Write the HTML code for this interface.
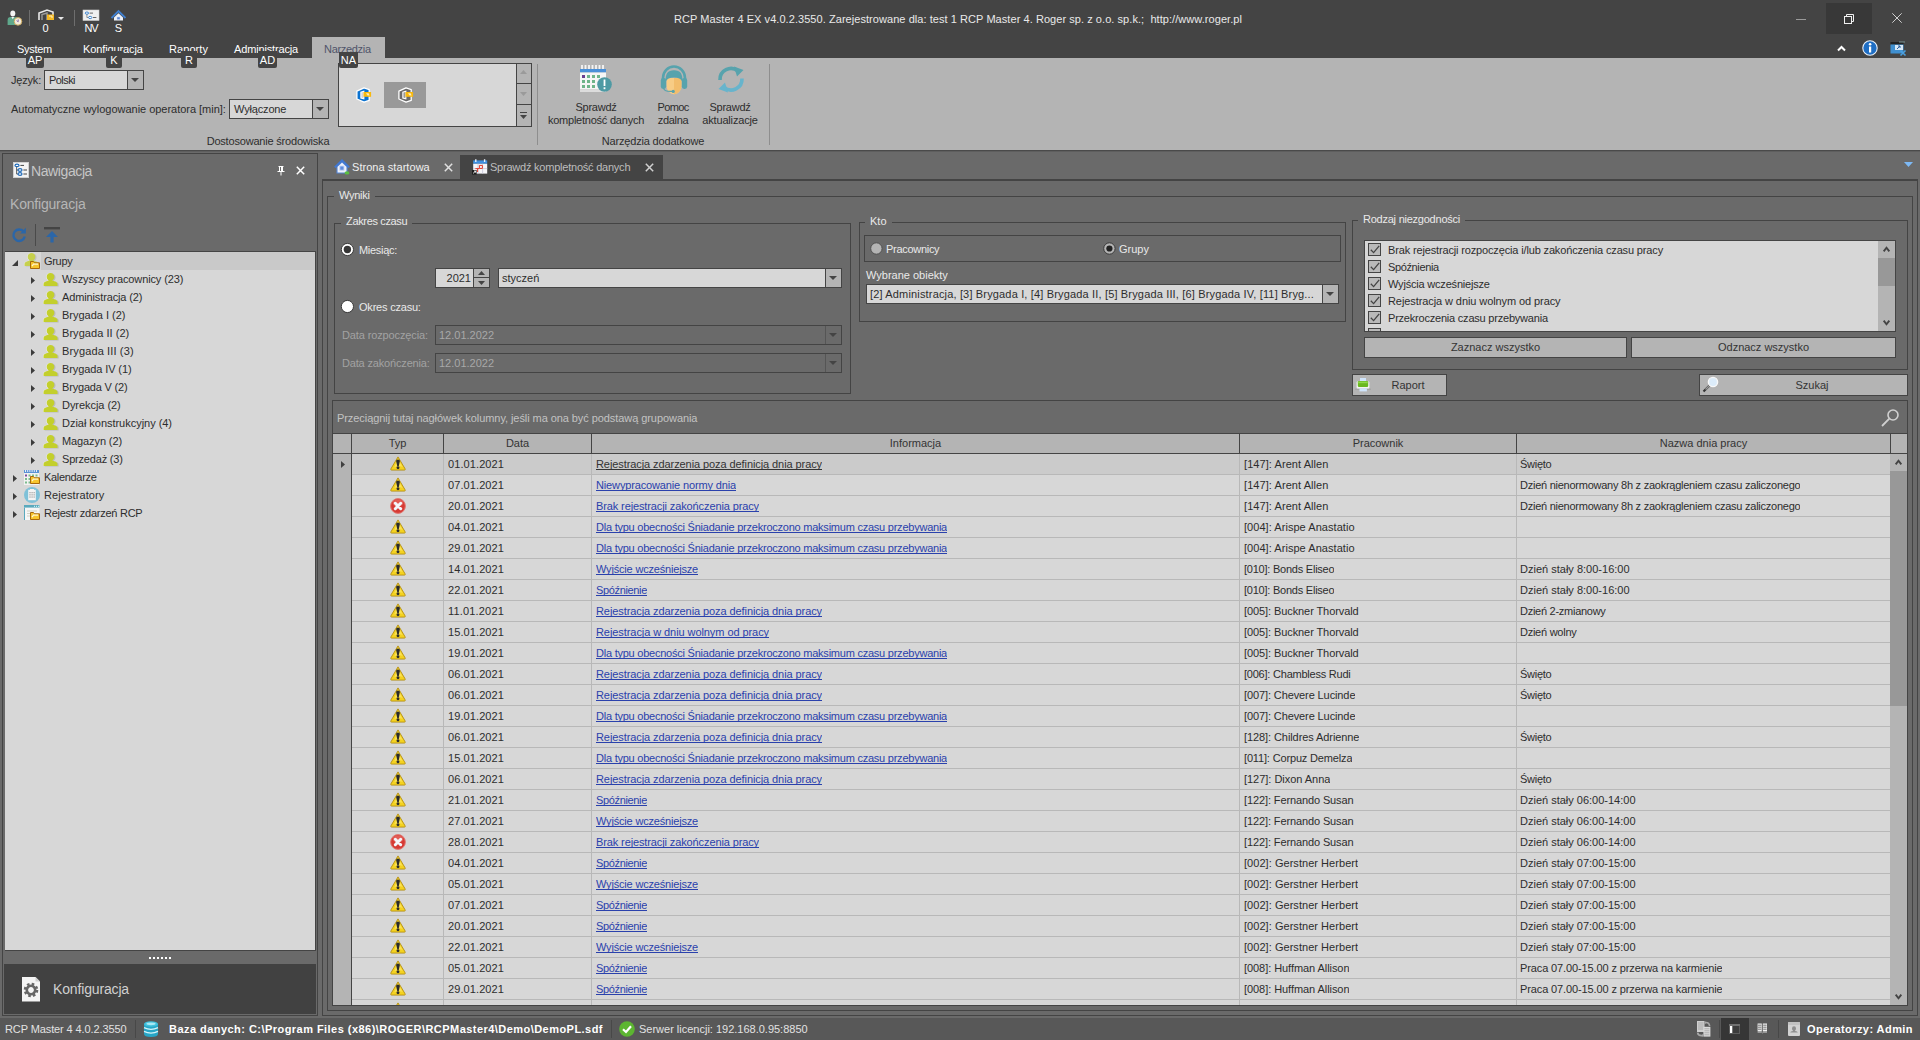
<!DOCTYPE html>
<html lang="pl">
<head>
<meta charset="utf-8">
<title>RCP Master 4</title>
<style>
*{box-sizing:border-box;margin:0;padding:0}
html,body{width:1920px;height:1040px;overflow:hidden;background:#6a6a6a}
body{font-family:"Liberation Sans",sans-serif;font-size:11px;color:#2d2d2d;position:relative;-webkit-font-smoothing:antialiased}
.a{position:absolute;white-space:pre}
.t{position:absolute;white-space:pre;line-height:13px;height:13px}
.lt{color:#e9e9e9}
.box{position:absolute;border:1px solid #444}
svg{position:absolute;overflow:visible}
.gl{position:absolute;background:#6a6a6a;padding:0 5px;line-height:13px;height:13px;color:#e9e9e9;white-space:pre}
.inp{position:absolute;border:1px solid #444;background:#d7d7d7}
.btn{position:absolute;border:1px solid #444;background:#b4b4b4;text-align:center;line-height:18px;color:#333}
.dd{position:absolute;top:0;right:0;bottom:0;width:16px;border-left:1px solid #444;background:#b4b4b4}
.dd:after{content:"";position:absolute;left:3px;top:7px;border:4px solid transparent;border-top:4px solid #444;border-bottom:0}
.kt{position:absolute;z-index:5;background:#444;color:#fff;text-align:center;line-height:13px;height:13px;border-radius:0 0 2px 2px}
/* grid */
.row{position:absolute;left:352px;width:1538px;height:21px;border-bottom:1px solid #b8b8b8;background:#d7d7d7}
.row.f{background:#cbcbcb}
.c{position:absolute;top:0;height:20px;line-height:20px;white-space:pre;overflow:hidden}
.vl{position:absolute;top:454px;height:551px;width:1px;background:#b8b8b8}
.lnk{color:#2a41ac;text-decoration:underline;text-decoration-skip-ink:none;text-underline-offset:1px;text-decoration-thickness:1px}
.row.f .lnk{color:#333}
.hd{position:absolute;top:434px;height:19px;line-height:18px;text-align:center;background:#b4b4b4;color:#333}
.hs{position:absolute;top:434px;height:20px;width:1px;background:#444}
.tr{position:absolute;left:0;width:310px;height:18px;line-height:18px}
.tr span{position:absolute;top:0;white-space:pre}
.arr{position:absolute;width:0;height:0;border:4px solid transparent;border-left:5px solid #444;border-right:0}
</style>
</head>
<body>
<!-- ===== title bar + ribbon ===== -->
<div class="a" style="left:0;top:0;width:1920px;height:58px;background:#444"></div>
<div class="a" style="left:0;top:58px;width:1920px;height:92px;background:#b4b4b4"></div>
<div class="a" style="left:0;top:150px;width:1920px;height:1px;background:#4a4a4a"></div>
<div class="a" style="left:0;top:151px;width:1920px;height:1px;background:#5e5e5e"></div>

<!-- quick access icons -->
<svg style="left:7px;top:10px" width="16" height="16" viewBox="0 0 16 16">
 <ellipse cx="5.8" cy="3.4" rx="2.5" ry="3" fill="#f4f4f4"/><path d="M0.6 15 V10 Q0.6 7 3.6 7 H8 Q11 7 11 10 V15 Z" fill="#5fa88c"/>
 <path d="M4.4 7 L5.8 9.2 L7.2 7 Z" fill="#f4f4f4"/>
 <circle cx="11" cy="11.4" r="3.8" fill="#f3ecdc" stroke="#caa555" stroke-width=".9"/><path d="M11.2 9.4 V11.8 L9.6 10.6" stroke="#8a6fb0" stroke-width="1" fill="none"/>
</svg>
<div class="a" style="left:29px;top:10px;width:1px;height:16px;background:#6e6e6e"></div>
<svg style="left:38px;top:9px" width="17" height="12" viewBox="0 0 17 12">
 <path d="M1 11 V4 L9 1 L15 3 V6" fill="none" stroke="#e8e8e8" stroke-width="1.6"/>
 <path d="M4 11 V5.5 L9 4 V11" fill="none" stroke="#9a9a9a" stroke-width="1.4"/>
 <rect x="9" y="5.5" width="7" height="5.5" fill="#f5b820"/><path d="M11 7 H14 L14 9" stroke="#fff3c8" stroke-width="1" fill="none"/>
</svg>
<svg style="left:58px;top:17px" width="6" height="3" viewBox="0 0 6 3"><path d="M0 0 H6 L3 3 Z" fill="#e8e8e8"/></svg>
<div class="t" style="left:35px;top:22px;width:21px;text-align:center;color:#fff">0</div>
<div class="a" style="left:74px;top:10px;width:1px;height:16px;background:#6e6e6e"></div>
<svg style="left:83px;top:10px" width="16" height="11" viewBox="0 0 16 11">
 <rect x="0" y="0" width="16" height="10.5" fill="#f0f0f0" stroke="#cfcfcf" stroke-width=".6"/>
 <path d="M3.9 4 V7.5 H5.6" stroke="#777" stroke-width=".8" fill="none"/>
 <ellipse cx="3.9" cy="3.1" rx="1.7" ry="1.1" fill="#fff" stroke="#2a78c8" stroke-width=".9"/>
 <ellipse cx="7.2" cy="7.5" rx="1.7" ry="1.1" fill="#fff" stroke="#2a78c8" stroke-width=".9"/>
 <path d="M6.6 3.1 H10 M10 7.5 H13.4" stroke="#666" stroke-width="1"/>
</svg>
<div class="t" style="letter-spacing:-1.141px;left:80px;top:22px;width:22px;text-align:center;color:#fff">NV</div>
<svg style="left:111px;top:10px" width="15" height="11" viewBox="0 0 15 11">
 <path d="M0.5 8 L7.5 1 L14.5 8" fill="none" stroke="#3f7fd0" stroke-width="1.8"/>
 <path d="M3 7.5 L7.5 3.2 L12 7.5 V10.5 H3 Z" fill="#eef2fa"/>
 <rect x="6" y="7" width="3" height="2.5" fill="#5a86d6" stroke="#c9d6f0" stroke-width=".5"/>
</svg>
<div class="t" style="left:108px;top:22px;width:21px;text-align:center;color:#fff">S</div>

<!-- title text -->
<div class="t" style="letter-spacing:0.057px;left:558px;top:13px;width:800px;text-align:center;color:#e9e9e9">RCP Master 4 EX v4.0.2.3550. Zarejestrowane dla: test 1 RCP Master 4. Roger sp. z o.o. sp.k.;  http://www.roger.pl</div>

<!-- window buttons -->
<div class="a" style="left:1796px;top:19px;width:10px;height:1px;background:#9a9a9a"></div>
<div class="a" style="left:1826px;top:3px;width:46px;height:31px;background:#383838"></div>
<svg style="left:1844px;top:14px" width="10" height="10" viewBox="0 0 10 10"><path d="M2.5 2.5 V0.5 H9.5 V7.5 H7.5" fill="none" stroke="#f0f0f0" stroke-width="1"/><rect x="0.5" y="2.5" width="7" height="7" fill="none" stroke="#f0f0f0" stroke-width="1"/></svg>
<svg style="left:1892px;top:13px" width="10" height="10" viewBox="0 0 10 10"><path d="M0.3 0.3 L9.7 9.7 M9.7 0.3 L0.3 9.7" stroke="#d0d0d0" stroke-width="1"/></svg>
<svg style="left:1837px;top:45px" width="9" height="7" viewBox="0 0 9 7"><path d="M1 5.5 L4.5 2 L8 5.5" fill="none" stroke="#fff" stroke-width="2"/></svg>
<svg style="left:1862px;top:40px" width="16" height="16" viewBox="0 0 16 16"><circle cx="8" cy="8" r="7.2" fill="#1f6ec4" stroke="#e8f0fa" stroke-width="1.1"/><rect x="7" y="6.5" width="2.2" height="6" fill="#fff"/><circle cx="8.1" cy="4.2" r="1.3" fill="#fff"/></svg>
<svg style="left:1890px;top:41px" width="17" height="15" viewBox="0 0 17 15">
 <rect x="0.5" y="1" width="13" height="2.5" fill="#222"/><rect x="0.5" y="3.5" width="13" height="9" fill="#3f8fd0"/>
 <rect x="5" y="4" width="8" height="5" fill="#d8e8f6"/><path d="M7 8 L10 5 M10 5 H8 M10 5 V7" stroke="#2a5f9e" stroke-width="1" fill="none"/>
 <path d="M10.5 9.5 L15.5 14.5 M15.5 9.5 L10.5 14.5" stroke="#4aa0e0" stroke-width="1.6"/>
 <path d="M10 0 v2 M12 0 v2 M14 0 v2" stroke="#8aa" stroke-width=".8"/>
</svg>

<!-- ribbon tabs -->
<div class="a" style="left:312px;top:37px;width:73px;height:21px;background:#b4b4b4"></div>
<div class="t lt" style="letter-spacing:-0.315px;left:17px;top:43px;color:#fff">System</div>
<div class="t lt" style="letter-spacing:-0.113px;left:83px;top:43px;color:#fff">Konfiguracja</div>
<div class="t lt" style="letter-spacing:0.067px;left:169px;top:43px;color:#fff">Raporty</div>
<div class="t lt" style="letter-spacing:-0.156px;left:234px;top:43px;color:#fff">Administracja</div>
<div class="t" style="letter-spacing:-0.315px;left:324px;top:43px;color:#50546a">Narzędzia</div>
<!-- key tips -->
<div class="kt" style="left:26px;top:54px;width:18px;height:14px">AP</div>
<div class="kt" style="left:106px;top:51px;width:16px;height:17px;padding-top:3px">K</div>
<div class="kt" style="left:181px;top:51px;width:16px;height:17px;padding-top:3px">R</div>
<div class="kt" style="left:258px;top:51px;width:19px;height:17px;padding-top:3px">AD</div>
<div class="kt" style="left:339px;top:52px;width:19px;height:16px;padding-top:2px">NA</div>

<!-- ribbon group 1 -->
<div class="t" style="letter-spacing:-0.198px;left:11px;top:74px">Język:</div>
<div class="inp" style="left:44px;top:70px;width:100px;height:20px"><div class="t" style="letter-spacing:-0.557px;left:4px;top:3px">Polski</div><div class="dd"></div></div>
<div class="t" style="letter-spacing:-0.025px;left:11px;top:103px">Automatyczne wylogowanie operatora [min]:</div>
<div class="inp" style="left:229px;top:99px;width:100px;height:20px"><div class="t" style="letter-spacing:-0.156px;left:4px;top:3px">Wyłączone</div><div class="dd"></div></div>
<div class="t" style="letter-spacing:-0.194px;left:168px;top:135px;width:200px;text-align:center">Dostosowanie środowiska</div>
<!-- gallery -->
<div class="inp" style="left:338px;top:63px;width:194px;height:64px"></div>
<div class="a" style="left:516px;top:64px;width:15px;height:62px;background:#b4b4b4;border-left:1px solid #444"></div>
<div class="a" style="left:516px;top:83px;width:15px;height:1px;background:#444"></div>
<div class="a" style="left:516px;top:104px;width:15px;height:1px;background:#444"></div>
<svg style="left:520px;top:70px" width="7" height="4" viewBox="0 0 7 4"><path d="M0 4 H7 L3.5 0 Z" fill="#9a9a9a"/></svg>
<svg style="left:520px;top:92px" width="7" height="4" viewBox="0 0 7 4"><path d="M0 0 H7 L3.5 4 Z" fill="#9a9a9a"/></svg>
<svg style="left:520px;top:112px" width="7" height="7" viewBox="0 0 7 7"><path d="M0 0.5 H7" stroke="#444" stroke-width="1"/><path d="M0 3 H7 L3.5 7 Z" fill="#444"/></svg>
<div class="a" style="left:384px;top:82px;width:42px;height:26px;background:#999"></div>
<svg style="left:356px;top:87px" width="16" height="16" viewBox="0 0 16 16">
 <path d="M0.9 4.2 L8 0.9 L13.2 2.6 V13.4 L8 15.1 L0.9 12 Z" fill="#0a72d0" stroke="#fff" stroke-width="1.3" stroke-linejoin="round"/>
 <path d="M4.3 4.8 L8.4 3.6 V12.6 L4.3 11.4 Z" fill="#fff"/><path d="M5.4 5.6 L7.4 5 V11.2 L5.4 10.6 Z" fill="#d4d4d4"/>
 <rect x="7.5" y="5" width="7.6" height="4.8" fill="#f8b90e"/><path d="M10 6.2 H12.6 L13.6 8.6 H11.6 Z" fill="#fdeec0"/>
</svg>
<svg style="left:398px;top:87px" width="16" height="16" viewBox="0 0 16 16">
 <path d="M0.9 4.2 L8 0.9 L13.2 2.6 V13.4 L8 15.1 L0.9 12 Z" fill="#6a6a6a" stroke="#fff" stroke-width="1.3" stroke-linejoin="round"/>
 <path d="M4.3 4.8 L8.4 3.6 V12.6 L4.3 11.4 Z" fill="#fff"/><path d="M5.4 5.6 L7.4 5 V11.2 L5.4 10.6 Z" fill="#9a9a9a"/>
 <rect x="7.5" y="5" width="7.6" height="4.8" fill="#f8b90e"/><path d="M10 6.2 H12.6 L13.6 8.6 H11.6 Z" fill="#fdeec0"/>
</svg>
<div class="a" style="left:537px;top:64px;width:1px;height:81px;background:#8e8e8e"></div>

<!-- ribbon group 2 : big buttons -->
<svg style="left:579px;top:65px" width="34" height="28" viewBox="0 0 34 28">
 <path d="M3 0 v5 M6.5 0 v5 M10 0 v5 M13.5 0 v5 M17 0 v5 M20.5 0 v5 M24 0 v5" stroke="#f4f4f4" stroke-width="1.8"/>
 <rect x="1" y="4" width="26" height="3.5" fill="#4a90d8"/>
 <rect x="1" y="7.5" width="26" height="17" fill="#f6f6f6"/><rect x="1" y="24.5" width="26" height="2.5" fill="#dcdcdc"/>
 <g fill="#6fb58a"><rect x="8" y="10" width="3" height="3"/><rect x="13" y="10" width="3" height="3"/><rect x="18" y="10" width="3" height="3"/>
 <rect x="3" y="15" width="3" height="3"/><rect x="8" y="15" width="3" height="3"/><rect x="13" y="15" width="3" height="3"/>
 <rect x="3" y="20" width="3" height="3"/><rect x="8" y="20" width="3" height="3"/><rect x="13" y="20" width="3" height="3"/></g>
 <rect x="3" y="10" width="3" height="3" fill="#6a3d90"/>
 <circle cx="25.5" cy="19.5" r="7.3" fill="#4e9aa4"/><rect x="24.6" y="14.5" width="1.8" height="6.5" fill="#fff"/><rect x="24.6" y="22.3" width="1.8" height="1.9" fill="#fff"/>
</svg>
<div class="t" style="letter-spacing:-0.257px;left:546px;top:101px;width:100px;text-align:center">Sprawdź</div>
<div class="t" style="letter-spacing:-0.227px;left:536px;top:114px;width:120px;text-align:center">kompletność danych</div>

<svg style="left:660px;top:65px" width="28" height="30" viewBox="0 0 28 30">
 <path d="M3 19 V13 A11 11.5 0 0 1 25 13 V19" fill="none" stroke="#57a3ad" stroke-width="2.6"/>
 <path d="M6.5 13 V20 Q6.5 26 11 28.5 Q14 30 17 28.5 Q21.5 26 21.5 20 V13 Z" fill="#f7cc85"/>
 <path d="M14 13 H21.5 V20 Q21.5 26 17 28.5 Q15.5 29.3 14 29.4 Z" fill="#f2bd6c"/>
 <path d="M5.8 16.5 Q4.6 5.2 14 5.2 Q23.4 5.2 22.2 16.5 Q20.5 12.5 14 12.5 Q7.5 12.5 5.8 16.5 Z" fill="#57a3ad"/>
 <rect x="0.8" y="13" width="5.4" height="11" rx="2.4" fill="#57a3ad"/><rect x="21.8" y="13" width="5.4" height="11" rx="2.4" fill="#57a3ad"/>
 <path d="M3.6 23 Q4 26.8 12 26.4" fill="none" stroke="#57a3ad" stroke-width="1.2"/><circle cx="13.2" cy="26.4" r="1.6" fill="#57a3ad"/>
</svg>
<div class="t" style="letter-spacing:-0.650px;left:633px;top:101px;width:80px;text-align:center">Pomoc</div>
<div class="t" style="letter-spacing:-0.320px;left:633px;top:114px;width:80px;text-align:center">zdalna</div>

<svg style="left:717px;top:65px" width="28" height="29" viewBox="0 0 28 29">
 <path d="M3 15 A11 11 0 0 1 21 6" fill="none" stroke="#57a3ad" stroke-width="3.6"/>
 <path d="M17 1.5 L26.5 5 L20 11.5 Z" fill="#57a3ad"/>
 <path d="M25 13.5 A11 11 0 0 1 7 22.5" fill="none" stroke="#67b4cc" stroke-width="3.6"/>
 <path d="M11 27.5 L1.5 24 L8 17.5 Z" fill="#67b4cc"/>
</svg>
<div class="t" style="letter-spacing:-0.257px;left:690px;top:101px;width:80px;text-align:center">Sprawdź</div>
<div class="t" style="letter-spacing:-0.174px;left:690px;top:114px;width:80px;text-align:center">aktualizacje</div>
<div class="t" style="letter-spacing:-0.174px;left:553px;top:135px;width:200px;text-align:center">Narzędzia dodatkowe</div>
<div class="a" style="left:769px;top:64px;width:1px;height:81px;background:#8e8e8e"></div>
<!-- ===== navigation panel ===== -->
<div class="box" style="left:2px;top:153px;width:316px;height:863px"></div>
<svg style="left:13px;top:162px" width="16" height="16" viewBox="0 0 16 16">
 <rect x="0.5" y="0.5" width="15" height="15" fill="#f4f4f4" stroke="#d0d0d0" stroke-width="1"/>
 <path d="M3.6 4 V12 H5 M3.6 8 H5" stroke="#555" stroke-width=".9" fill="none"/>
 <ellipse cx="4" cy="3.4" rx="2" ry="1.3" fill="#fff" stroke="#1f6ab8" stroke-width="1.2"/>
 <ellipse cx="7" cy="8" rx="2" ry="1.3" fill="#fff" stroke="#1f6ab8" stroke-width="1.2"/>
 <ellipse cx="7" cy="12" rx="2" ry="1.3" fill="#fff" stroke="#1f6ab8" stroke-width="1.2"/>
 <path d="M7.4 3.4 H11 M10.4 8 H14 M10.4 12 H14" stroke="#444" stroke-width="1"/>
</svg>
<div class="a" style="letter-spacing:-0.399px;left:31px;top:163px;font-size:14px;line-height:17px;color:#c6c6c6">Nawigacja</div>
<svg style="left:277px;top:166px" width="8" height="10" viewBox="0 0 8 10"><path d="M1.5 0.5 H6.5 M2.5 0.5 V5 M5.5 0.5 V5 M4.5 0.5 V5 M0.5 5.5 H7.5 M4 6 V9.5" stroke="#fff" stroke-width="1" fill="none"/></svg>
<svg style="left:296px;top:166px" width="9" height="9" viewBox="0 0 9 9"><path d="M0.8 0.8 L8.2 8.2 M8.2 0.8 L0.8 8.2" stroke="#fff" stroke-width="1.5"/></svg>
<div class="a" style="letter-spacing:-0.194px;left:10px;top:196px;font-size:14px;line-height:17px;color:#b6b6b6">Konfiguracja</div>
<svg style="left:11px;top:227px" width="16" height="16" viewBox="0 0 14 14"><path d="M11.2 4.3 A5 5 0 1 0 12 8.3" fill="none" stroke="#2b66a8" stroke-width="2.1"/><path d="M8 5.6 H13 V0.6 Z" fill="#2b66a8"/></svg>
<div class="a" style="left:35px;top:224px;width:1px;height:22px;background:#4a4a4a"></div>
<svg style="left:44px;top:227px" width="16" height="16" viewBox="0 0 16 16"><rect x="0" y="0" width="16" height="2.4" fill="#444"/><path d="M8 4 L14 10 H9.6 V15.6 H6.4 V10 H2 Z" fill="#2b66a8"/></svg>
<div class="a" style="left:5px;top:251px;width:311px;height:700px;background:#d7d7d7;border-top:1px solid #444;border-bottom:1px solid #444;border-right:1px solid #444"></div>
<div class="a" style="left:41px;top:252px;width:274px;height:18px;background:#c9c9c9"></div>
<svg style="left:12px;top:260px" width="6" height="6" viewBox="0 0 6 6"><path d="M6 0 V6 H0 Z" fill="#3c3c3c"/></svg>
<svg style="opacity:.8;left:24px;top:253px" width="16" height="13" viewBox="0 0 16 13">
 <path d="M7.5 0 C10 0 11.3 1.8 11.3 3.8 C11.3 5.6 10.4 6.6 9.6 7.2 L9.6 7.8 C12.5 8.3 14.5 9.3 14.5 11 V13 H0.5 V11 C0.5 9.3 2.5 8.3 5.4 7.8 L5.4 7.2 C4.6 6.6 3.7 5.6 3.7 3.8 C3.7 1.8 5 0 7.5 0 Z" transform="translate(1.2,0.4)" fill="#bcbcbc"/>
 <path d="M7.5 0 C10 0 11.3 1.8 11.3 3.8 C11.3 5.6 10.4 6.6 9.6 7.2 L9.6 7.8 C12.5 8.3 14.5 9.3 14.5 11 V13 H0.5 V11 C0.5 9.3 2.5 8.3 5.4 7.8 L5.4 7.2 C4.6 6.6 3.7 5.6 3.7 3.8 C3.7 1.8 5 0 7.5 0 Z" transform="translate(-0.5,0)" fill="#f0f0f0"/>
 <path d="M7.5 0 C10 0 11.3 1.8 11.3 3.8 C11.3 5.6 10.4 6.6 9.6 7.2 L9.6 7.8 C12.5 8.3 14.5 9.3 14.5 11 V13 H0.5 V11 C0.5 9.3 2.5 8.3 5.4 7.8 L5.4 7.2 C4.6 6.6 3.7 5.6 3.7 3.8 C3.7 1.8 5 0 7.5 0 Z" fill="#c3cf2c"/>
</svg>
<svg style="left:30px;top:261px" width="10" height="8" viewBox="0 0 10 8"><path d="M0.5 7.5 V0.5 H3.5 L4.5 1.8 H9.5 V7.5 Z" fill="#f7c52d" stroke="#a8690c" stroke-width="1"/><path d="M2 5.2 L3.5 3.2 H8" stroke="#fff6cf" stroke-width="1.3" fill="none"/></svg>
<div class="t" style="letter-spacing:-0.314px;left:44px;top:255px">Grupy</div>
<svg style="left:31px;top:277px" width="4" height="7" viewBox="0 0 4 7"><path d="M0 0 L4 3.5 L0 7 Z" fill="#3c3c3c"/></svg>
<svg style="left:43px;top:273px" width="16" height="13" viewBox="0 0 16 13">
 <path d="M7.5 0 C10 0 11.3 1.8 11.3 3.8 C11.3 5.6 10.4 6.6 9.6 7.2 L9.6 7.8 C12.5 8.3 14.5 9.3 14.5 11 V13 H0.5 V11 C0.5 9.3 2.5 8.3 5.4 7.8 L5.4 7.2 C4.6 6.6 3.7 5.6 3.7 3.8 C3.7 1.8 5 0 7.5 0 Z" transform="translate(1.2,0.4)" fill="#bcbcbc"/>
 <path d="M7.5 0 C10 0 11.3 1.8 11.3 3.8 C11.3 5.6 10.4 6.6 9.6 7.2 L9.6 7.8 C12.5 8.3 14.5 9.3 14.5 11 V13 H0.5 V11 C0.5 9.3 2.5 8.3 5.4 7.8 L5.4 7.2 C4.6 6.6 3.7 5.6 3.7 3.8 C3.7 1.8 5 0 7.5 0 Z" transform="translate(-0.5,0)" fill="#f0f0f0"/>
 <path d="M7.5 0 C10 0 11.3 1.8 11.3 3.8 C11.3 5.6 10.4 6.6 9.6 7.2 L9.6 7.8 C12.5 8.3 14.5 9.3 14.5 11 V13 H0.5 V11 C0.5 9.3 2.5 8.3 5.4 7.8 L5.4 7.2 C4.6 6.6 3.7 5.6 3.7 3.8 C3.7 1.8 5 0 7.5 0 Z" fill="#c3cf2c"/>
</svg>
<div class="t" style="letter-spacing:-0.125px;left:62px;top:273px">Wszyscy pracownicy (23)</div>
<svg style="left:31px;top:295px" width="4" height="7" viewBox="0 0 4 7"><path d="M0 0 L4 3.5 L0 7 Z" fill="#3c3c3c"/></svg>
<svg style="left:43px;top:291px" width="16" height="13" viewBox="0 0 16 13">
 <path d="M7.5 0 C10 0 11.3 1.8 11.3 3.8 C11.3 5.6 10.4 6.6 9.6 7.2 L9.6 7.8 C12.5 8.3 14.5 9.3 14.5 11 V13 H0.5 V11 C0.5 9.3 2.5 8.3 5.4 7.8 L5.4 7.2 C4.6 6.6 3.7 5.6 3.7 3.8 C3.7 1.8 5 0 7.5 0 Z" transform="translate(1.2,0.4)" fill="#bcbcbc"/>
 <path d="M7.5 0 C10 0 11.3 1.8 11.3 3.8 C11.3 5.6 10.4 6.6 9.6 7.2 L9.6 7.8 C12.5 8.3 14.5 9.3 14.5 11 V13 H0.5 V11 C0.5 9.3 2.5 8.3 5.4 7.8 L5.4 7.2 C4.6 6.6 3.7 5.6 3.7 3.8 C3.7 1.8 5 0 7.5 0 Z" transform="translate(-0.5,0)" fill="#f0f0f0"/>
 <path d="M7.5 0 C10 0 11.3 1.8 11.3 3.8 C11.3 5.6 10.4 6.6 9.6 7.2 L9.6 7.8 C12.5 8.3 14.5 9.3 14.5 11 V13 H0.5 V11 C0.5 9.3 2.5 8.3 5.4 7.8 L5.4 7.2 C4.6 6.6 3.7 5.6 3.7 3.8 C3.7 1.8 5 0 7.5 0 Z" fill="#c3cf2c"/>
</svg>
<div class="t" style="letter-spacing:-0.131px;left:62px;top:291px">Administracja (2)</div>
<svg style="left:31px;top:313px" width="4" height="7" viewBox="0 0 4 7"><path d="M0 0 L4 3.5 L0 7 Z" fill="#3c3c3c"/></svg>
<svg style="left:43px;top:309px" width="16" height="13" viewBox="0 0 16 13">
 <path d="M7.5 0 C10 0 11.3 1.8 11.3 3.8 C11.3 5.6 10.4 6.6 9.6 7.2 L9.6 7.8 C12.5 8.3 14.5 9.3 14.5 11 V13 H0.5 V11 C0.5 9.3 2.5 8.3 5.4 7.8 L5.4 7.2 C4.6 6.6 3.7 5.6 3.7 3.8 C3.7 1.8 5 0 7.5 0 Z" transform="translate(1.2,0.4)" fill="#bcbcbc"/>
 <path d="M7.5 0 C10 0 11.3 1.8 11.3 3.8 C11.3 5.6 10.4 6.6 9.6 7.2 L9.6 7.8 C12.5 8.3 14.5 9.3 14.5 11 V13 H0.5 V11 C0.5 9.3 2.5 8.3 5.4 7.8 L5.4 7.2 C4.6 6.6 3.7 5.6 3.7 3.8 C3.7 1.8 5 0 7.5 0 Z" transform="translate(-0.5,0)" fill="#f0f0f0"/>
 <path d="M7.5 0 C10 0 11.3 1.8 11.3 3.8 C11.3 5.6 10.4 6.6 9.6 7.2 L9.6 7.8 C12.5 8.3 14.5 9.3 14.5 11 V13 H0.5 V11 C0.5 9.3 2.5 8.3 5.4 7.8 L5.4 7.2 C4.6 6.6 3.7 5.6 3.7 3.8 C3.7 1.8 5 0 7.5 0 Z" fill="#c3cf2c"/>
</svg>
<div class="t" style="letter-spacing:-0.007px;left:62px;top:309px">Brygada I (2)</div>
<svg style="left:31px;top:331px" width="4" height="7" viewBox="0 0 4 7"><path d="M0 0 L4 3.5 L0 7 Z" fill="#3c3c3c"/></svg>
<svg style="left:43px;top:327px" width="16" height="13" viewBox="0 0 16 13">
 <path d="M7.5 0 C10 0 11.3 1.8 11.3 3.8 C11.3 5.6 10.4 6.6 9.6 7.2 L9.6 7.8 C12.5 8.3 14.5 9.3 14.5 11 V13 H0.5 V11 C0.5 9.3 2.5 8.3 5.4 7.8 L5.4 7.2 C4.6 6.6 3.7 5.6 3.7 3.8 C3.7 1.8 5 0 7.5 0 Z" transform="translate(1.2,0.4)" fill="#bcbcbc"/>
 <path d="M7.5 0 C10 0 11.3 1.8 11.3 3.8 C11.3 5.6 10.4 6.6 9.6 7.2 L9.6 7.8 C12.5 8.3 14.5 9.3 14.5 11 V13 H0.5 V11 C0.5 9.3 2.5 8.3 5.4 7.8 L5.4 7.2 C4.6 6.6 3.7 5.6 3.7 3.8 C3.7 1.8 5 0 7.5 0 Z" transform="translate(-0.5,0)" fill="#f0f0f0"/>
 <path d="M7.5 0 C10 0 11.3 1.8 11.3 3.8 C11.3 5.6 10.4 6.6 9.6 7.2 L9.6 7.8 C12.5 8.3 14.5 9.3 14.5 11 V13 H0.5 V11 C0.5 9.3 2.5 8.3 5.4 7.8 L5.4 7.2 C4.6 6.6 3.7 5.6 3.7 3.8 C3.7 1.8 5 0 7.5 0 Z" fill="#c3cf2c"/>
</svg>
<div class="t" style="letter-spacing:0.047px;left:62px;top:327px">Brygada II (2)</div>
<svg style="left:31px;top:349px" width="4" height="7" viewBox="0 0 4 7"><path d="M0 0 L4 3.5 L0 7 Z" fill="#3c3c3c"/></svg>
<svg style="left:43px;top:345px" width="16" height="13" viewBox="0 0 16 13">
 <path d="M7.5 0 C10 0 11.3 1.8 11.3 3.8 C11.3 5.6 10.4 6.6 9.6 7.2 L9.6 7.8 C12.5 8.3 14.5 9.3 14.5 11 V13 H0.5 V11 C0.5 9.3 2.5 8.3 5.4 7.8 L5.4 7.2 C4.6 6.6 3.7 5.6 3.7 3.8 C3.7 1.8 5 0 7.5 0 Z" transform="translate(1.2,0.4)" fill="#bcbcbc"/>
 <path d="M7.5 0 C10 0 11.3 1.8 11.3 3.8 C11.3 5.6 10.4 6.6 9.6 7.2 L9.6 7.8 C12.5 8.3 14.5 9.3 14.5 11 V13 H0.5 V11 C0.5 9.3 2.5 8.3 5.4 7.8 L5.4 7.2 C4.6 6.6 3.7 5.6 3.7 3.8 C3.7 1.8 5 0 7.5 0 Z" transform="translate(-0.5,0)" fill="#f0f0f0"/>
 <path d="M7.5 0 C10 0 11.3 1.8 11.3 3.8 C11.3 5.6 10.4 6.6 9.6 7.2 L9.6 7.8 C12.5 8.3 14.5 9.3 14.5 11 V13 H0.5 V11 C0.5 9.3 2.5 8.3 5.4 7.8 L5.4 7.2 C4.6 6.6 3.7 5.6 3.7 3.8 C3.7 1.8 5 0 7.5 0 Z" fill="#c3cf2c"/>
</svg>
<div class="t" style="letter-spacing:0.133px;left:62px;top:345px">Brygada III (3)</div>
<svg style="left:31px;top:367px" width="4" height="7" viewBox="0 0 4 7"><path d="M0 0 L4 3.5 L0 7 Z" fill="#3c3c3c"/></svg>
<svg style="left:43px;top:363px" width="16" height="13" viewBox="0 0 16 13">
 <path d="M7.5 0 C10 0 11.3 1.8 11.3 3.8 C11.3 5.6 10.4 6.6 9.6 7.2 L9.6 7.8 C12.5 8.3 14.5 9.3 14.5 11 V13 H0.5 V11 C0.5 9.3 2.5 8.3 5.4 7.8 L5.4 7.2 C4.6 6.6 3.7 5.6 3.7 3.8 C3.7 1.8 5 0 7.5 0 Z" transform="translate(1.2,0.4)" fill="#bcbcbc"/>
 <path d="M7.5 0 C10 0 11.3 1.8 11.3 3.8 C11.3 5.6 10.4 6.6 9.6 7.2 L9.6 7.8 C12.5 8.3 14.5 9.3 14.5 11 V13 H0.5 V11 C0.5 9.3 2.5 8.3 5.4 7.8 L5.4 7.2 C4.6 6.6 3.7 5.6 3.7 3.8 C3.7 1.8 5 0 7.5 0 Z" transform="translate(-0.5,0)" fill="#f0f0f0"/>
 <path d="M7.5 0 C10 0 11.3 1.8 11.3 3.8 C11.3 5.6 10.4 6.6 9.6 7.2 L9.6 7.8 C12.5 8.3 14.5 9.3 14.5 11 V13 H0.5 V11 C0.5 9.3 2.5 8.3 5.4 7.8 L5.4 7.2 C4.6 6.6 3.7 5.6 3.7 3.8 C3.7 1.8 5 0 7.5 0 Z" fill="#c3cf2c"/>
</svg>
<div class="t" style="letter-spacing:-0.102px;left:62px;top:363px">Brygada IV (1)</div>
<svg style="left:31px;top:385px" width="4" height="7" viewBox="0 0 4 7"><path d="M0 0 L4 3.5 L0 7 Z" fill="#3c3c3c"/></svg>
<svg style="left:43px;top:381px" width="16" height="13" viewBox="0 0 16 13">
 <path d="M7.5 0 C10 0 11.3 1.8 11.3 3.8 C11.3 5.6 10.4 6.6 9.6 7.2 L9.6 7.8 C12.5 8.3 14.5 9.3 14.5 11 V13 H0.5 V11 C0.5 9.3 2.5 8.3 5.4 7.8 L5.4 7.2 C4.6 6.6 3.7 5.6 3.7 3.8 C3.7 1.8 5 0 7.5 0 Z" transform="translate(1.2,0.4)" fill="#bcbcbc"/>
 <path d="M7.5 0 C10 0 11.3 1.8 11.3 3.8 C11.3 5.6 10.4 6.6 9.6 7.2 L9.6 7.8 C12.5 8.3 14.5 9.3 14.5 11 V13 H0.5 V11 C0.5 9.3 2.5 8.3 5.4 7.8 L5.4 7.2 C4.6 6.6 3.7 5.6 3.7 3.8 C3.7 1.8 5 0 7.5 0 Z" transform="translate(-0.5,0)" fill="#f0f0f0"/>
 <path d="M7.5 0 C10 0 11.3 1.8 11.3 3.8 C11.3 5.6 10.4 6.6 9.6 7.2 L9.6 7.8 C12.5 8.3 14.5 9.3 14.5 11 V13 H0.5 V11 C0.5 9.3 2.5 8.3 5.4 7.8 L5.4 7.2 C4.6 6.6 3.7 5.6 3.7 3.8 C3.7 1.8 5 0 7.5 0 Z" fill="#c3cf2c"/>
</svg>
<div class="t" style="letter-spacing:-0.183px;left:62px;top:381px">Brygada V (2)</div>
<svg style="left:31px;top:403px" width="4" height="7" viewBox="0 0 4 7"><path d="M0 0 L4 3.5 L0 7 Z" fill="#3c3c3c"/></svg>
<svg style="left:43px;top:399px" width="16" height="13" viewBox="0 0 16 13">
 <path d="M7.5 0 C10 0 11.3 1.8 11.3 3.8 C11.3 5.6 10.4 6.6 9.6 7.2 L9.6 7.8 C12.5 8.3 14.5 9.3 14.5 11 V13 H0.5 V11 C0.5 9.3 2.5 8.3 5.4 7.8 L5.4 7.2 C4.6 6.6 3.7 5.6 3.7 3.8 C3.7 1.8 5 0 7.5 0 Z" transform="translate(1.2,0.4)" fill="#bcbcbc"/>
 <path d="M7.5 0 C10 0 11.3 1.8 11.3 3.8 C11.3 5.6 10.4 6.6 9.6 7.2 L9.6 7.8 C12.5 8.3 14.5 9.3 14.5 11 V13 H0.5 V11 C0.5 9.3 2.5 8.3 5.4 7.8 L5.4 7.2 C4.6 6.6 3.7 5.6 3.7 3.8 C3.7 1.8 5 0 7.5 0 Z" transform="translate(-0.5,0)" fill="#f0f0f0"/>
 <path d="M7.5 0 C10 0 11.3 1.8 11.3 3.8 C11.3 5.6 10.4 6.6 9.6 7.2 L9.6 7.8 C12.5 8.3 14.5 9.3 14.5 11 V13 H0.5 V11 C0.5 9.3 2.5 8.3 5.4 7.8 L5.4 7.2 C4.6 6.6 3.7 5.6 3.7 3.8 C3.7 1.8 5 0 7.5 0 Z" fill="#c3cf2c"/>
</svg>
<div class="t" style="letter-spacing:-0.050px;left:62px;top:399px">Dyrekcja (2)</div>
<svg style="left:31px;top:421px" width="4" height="7" viewBox="0 0 4 7"><path d="M0 0 L4 3.5 L0 7 Z" fill="#3c3c3c"/></svg>
<svg style="left:43px;top:417px" width="16" height="13" viewBox="0 0 16 13">
 <path d="M7.5 0 C10 0 11.3 1.8 11.3 3.8 C11.3 5.6 10.4 6.6 9.6 7.2 L9.6 7.8 C12.5 8.3 14.5 9.3 14.5 11 V13 H0.5 V11 C0.5 9.3 2.5 8.3 5.4 7.8 L5.4 7.2 C4.6 6.6 3.7 5.6 3.7 3.8 C3.7 1.8 5 0 7.5 0 Z" transform="translate(1.2,0.4)" fill="#bcbcbc"/>
 <path d="M7.5 0 C10 0 11.3 1.8 11.3 3.8 C11.3 5.6 10.4 6.6 9.6 7.2 L9.6 7.8 C12.5 8.3 14.5 9.3 14.5 11 V13 H0.5 V11 C0.5 9.3 2.5 8.3 5.4 7.8 L5.4 7.2 C4.6 6.6 3.7 5.6 3.7 3.8 C3.7 1.8 5 0 7.5 0 Z" transform="translate(-0.5,0)" fill="#f0f0f0"/>
 <path d="M7.5 0 C10 0 11.3 1.8 11.3 3.8 C11.3 5.6 10.4 6.6 9.6 7.2 L9.6 7.8 C12.5 8.3 14.5 9.3 14.5 11 V13 H0.5 V11 C0.5 9.3 2.5 8.3 5.4 7.8 L5.4 7.2 C4.6 6.6 3.7 5.6 3.7 3.8 C3.7 1.8 5 0 7.5 0 Z" fill="#c3cf2c"/>
</svg>
<div class="t" style="letter-spacing:-0.028px;left:62px;top:417px">Dział konstrukcyjny (4)</div>
<svg style="left:31px;top:439px" width="4" height="7" viewBox="0 0 4 7"><path d="M0 0 L4 3.5 L0 7 Z" fill="#3c3c3c"/></svg>
<svg style="left:43px;top:435px" width="16" height="13" viewBox="0 0 16 13">
 <path d="M7.5 0 C10 0 11.3 1.8 11.3 3.8 C11.3 5.6 10.4 6.6 9.6 7.2 L9.6 7.8 C12.5 8.3 14.5 9.3 14.5 11 V13 H0.5 V11 C0.5 9.3 2.5 8.3 5.4 7.8 L5.4 7.2 C4.6 6.6 3.7 5.6 3.7 3.8 C3.7 1.8 5 0 7.5 0 Z" transform="translate(1.2,0.4)" fill="#bcbcbc"/>
 <path d="M7.5 0 C10 0 11.3 1.8 11.3 3.8 C11.3 5.6 10.4 6.6 9.6 7.2 L9.6 7.8 C12.5 8.3 14.5 9.3 14.5 11 V13 H0.5 V11 C0.5 9.3 2.5 8.3 5.4 7.8 L5.4 7.2 C4.6 6.6 3.7 5.6 3.7 3.8 C3.7 1.8 5 0 7.5 0 Z" transform="translate(-0.5,0)" fill="#f0f0f0"/>
 <path d="M7.5 0 C10 0 11.3 1.8 11.3 3.8 C11.3 5.6 10.4 6.6 9.6 7.2 L9.6 7.8 C12.5 8.3 14.5 9.3 14.5 11 V13 H0.5 V11 C0.5 9.3 2.5 8.3 5.4 7.8 L5.4 7.2 C4.6 6.6 3.7 5.6 3.7 3.8 C3.7 1.8 5 0 7.5 0 Z" fill="#c3cf2c"/>
</svg>
<div class="t" style="letter-spacing:-0.104px;left:62px;top:435px">Magazyn (2)</div>
<svg style="left:31px;top:457px" width="4" height="7" viewBox="0 0 4 7"><path d="M0 0 L4 3.5 L0 7 Z" fill="#3c3c3c"/></svg>
<svg style="left:43px;top:453px" width="16" height="13" viewBox="0 0 16 13">
 <path d="M7.5 0 C10 0 11.3 1.8 11.3 3.8 C11.3 5.6 10.4 6.6 9.6 7.2 L9.6 7.8 C12.5 8.3 14.5 9.3 14.5 11 V13 H0.5 V11 C0.5 9.3 2.5 8.3 5.4 7.8 L5.4 7.2 C4.6 6.6 3.7 5.6 3.7 3.8 C3.7 1.8 5 0 7.5 0 Z" transform="translate(1.2,0.4)" fill="#bcbcbc"/>
 <path d="M7.5 0 C10 0 11.3 1.8 11.3 3.8 C11.3 5.6 10.4 6.6 9.6 7.2 L9.6 7.8 C12.5 8.3 14.5 9.3 14.5 11 V13 H0.5 V11 C0.5 9.3 2.5 8.3 5.4 7.8 L5.4 7.2 C4.6 6.6 3.7 5.6 3.7 3.8 C3.7 1.8 5 0 7.5 0 Z" transform="translate(-0.5,0)" fill="#f0f0f0"/>
 <path d="M7.5 0 C10 0 11.3 1.8 11.3 3.8 C11.3 5.6 10.4 6.6 9.6 7.2 L9.6 7.8 C12.5 8.3 14.5 9.3 14.5 11 V13 H0.5 V11 C0.5 9.3 2.5 8.3 5.4 7.8 L5.4 7.2 C4.6 6.6 3.7 5.6 3.7 3.8 C3.7 1.8 5 0 7.5 0 Z" fill="#c3cf2c"/>
</svg>
<div class="t" style="letter-spacing:-0.190px;left:62px;top:453px">Sprzedaż (3)</div>
<svg style="left:13px;top:475px" width="4" height="7" viewBox="0 0 4 7"><path d="M0 0 L4 3.5 L0 7 Z" fill="#3c3c3c"/></svg>
<svg style="left:24px;top:470px" width="16" height="16" viewBox="0 0 16 16"><rect x="0" y="0" width="15" height="3" fill="#5b93d6"/><path d="M1.5 0 v2 M3.7 0 v2 M5.9 0 v2 M8.1 0 v2 M10.3 0 v2 M12.5 0 v2" stroke="#e8eef8" stroke-width="1"/><rect x="0" y="3" width="15" height="12" fill="#f2f2f2"/>
 <g fill="#7dbb8f"><rect x="4.5" y="4.5" width="2" height="2"/><rect x="8" y="4.5" width="2" height="2"/><rect x="11.5" y="4.5" width="2" height="2"/><rect x="1" y="8" width="2" height="2"/><rect x="4.5" y="8" width="2" height="2"/><rect x="1" y="11.5" width="2" height="2"/><rect x="4.5" y="11.5" width="2" height="2"/></g><rect x="1" y="4.5" width="2" height="2" fill="#7a4aa0"/></svg>
<svg style="left:30px;top:476px" width="10" height="8" viewBox="0 0 10 8"><path d="M0.5 7.5 V0.5 H3.5 L4.5 1.8 H9.5 V7.5 Z" fill="#f7c52d" stroke="#a8690c" stroke-width="1"/><path d="M2 5.2 L3.5 3.2 H8" stroke="#fff6cf" stroke-width="1.3" fill="none"/></svg>
<div class="t" style="letter-spacing:-0.316px;left:44px;top:471px">Kalendarze</div>
<svg style="left:13px;top:493px" width="4" height="7" viewBox="0 0 4 7"><path d="M0 0 L4 3.5 L0 7 Z" fill="#3c3c3c"/></svg>
<svg style="left:24px;top:487px" width="16" height="16" viewBox="0 0 16 16"><circle cx="8" cy="8" r="8" fill="#7fc1d8"/><rect x="4.2" y="2.8" width="7.6" height="10.4" fill="#f4f4f4"/><rect x="6" y="2" width="4" height="1.5" fill="#f4f4f4"/><g fill="#b8b8b8"><rect x="5.2" y="5" width="1.6" height="1.3"/><rect x="7.3" y="5" width="1.6" height="1.3"/><rect x="9.4" y="5" width="1.6" height="1.3"/><rect x="5.2" y="7.2" width="1.6" height="1.3"/><rect x="7.3" y="7.2" width="1.6" height="1.3"/><rect x="9.4" y="7.2" width="1.6" height="1.3"/><rect x="5.2" y="9.4" width="1.6" height="1.3"/><rect x="7.3" y="9.4" width="1.6" height="1.3"/><rect x="9.4" y="9.4" width="1.6" height="1.3"/></g></svg>
<div class="t" style="letter-spacing:0.084px;left:44px;top:489px">Rejestratory</div>
<svg style="left:13px;top:511px" width="4" height="7" viewBox="0 0 4 7"><path d="M0 0 L4 3.5 L0 7 Z" fill="#3c3c3c"/></svg>
<svg style="left:24px;top:505px" width="16" height="16" viewBox="0 0 16 16"><rect x="0" y="0" width="15.5" height="15" fill="#f6f6f6"/><rect x="0" y="0" width="15.5" height="2.6" fill="#5aa9bd"/><path d="M10 1.3 h1 M12 1.3 h1 M14 1.3 h1" stroke="#dff" stroke-width="1"/><rect x="0" y="2.6" width="1" height="12.4" fill="#5aa9bd"/><path d="M3 6 H13 M3 8.5 H9 M3 11 H7" stroke="#d2d2c4" stroke-width="1"/></svg>
<svg style="left:30px;top:512px" width="10" height="8" viewBox="0 0 10 8"><path d="M0.5 7.5 V0.5 H3.5 L4.5 1.8 H9.5 V7.5 Z" fill="#f7c52d" stroke="#a8690c" stroke-width="1"/><path d="M2 5.2 L3.5 3.2 H8" stroke="#fff6cf" stroke-width="1.3" fill="none"/></svg>
<div class="t" style="letter-spacing:-0.259px;left:44px;top:507px">Rejestr zdarzeń RCP</div>
<div class="a" style="left:149px;top:957px;width:22px;height:1px;background:repeating-linear-gradient(90deg,#fff 0,#fff 2px,transparent 2px,transparent 4px)"></div>
<div class="a" style="left:149px;top:958px;width:22px;height:1px;background:repeating-linear-gradient(90deg,#fff 0,#fff 2px,transparent 2px,transparent 4px)"></div>
<div class="a" style="left:4px;top:964px;width:312px;height:50px;background:#414141"></div>
<svg style="left:22px;top:977px" width="18" height="25" viewBox="0 0 18 25"><path d="M0 0 H13.5 L18 4.5 V24.5 H0 Z" fill="#f4f4f4"/><path d="M13.5 0 V4.5 H18 Z" fill="#cfcfcf"/>
 <g transform="translate(9,13)"><circle r="6" fill="none" stroke="#666" stroke-width="2.6" stroke-dasharray="2.5 2.21"/><circle r="4.2" fill="none" stroke="#666" stroke-width="2.6"/></g></svg>
<div class="a" style="letter-spacing:-0.152px;left:53px;top:981px;font-size:14px;line-height:17px;color:#d0d0d0">Konfiguracja</div>
<!-- ===== status bar ===== -->
<div class="a" style="left:0;top:1018px;width:1920px;height:22px;background:#585858"></div>
<div class="t" style="letter-spacing:-0.105px;left:5px;top:1023px;color:#e2e2e2">RCP Master 4 4.0.2.3550</div>
<div class="a" style="left:135px;top:1020px;width:1px;height:18px;background:#484848"></div>
<svg style="left:144px;top:1021px" width="14" height="16" viewBox="0 0 14 16"><path d="M0 3 V13 Q0 16 7 16 Q14 16 14 13 V3 Z" fill="#27a6c6"/><ellipse cx="7" cy="3" rx="7" ry="2.8" fill="#3fc0dc"/><ellipse cx="7" cy="2.8" rx="4.6" ry="1.4" fill="#a8e8f4"/><path d="M0 6.6 Q7 10 14 6.6 M0 10.4 Q7 13.8 14 10.4" fill="none" stroke="#d4f4fa" stroke-width="1.3"/></svg>
<div class="t" style="letter-spacing:0.458px;left:169px;top:1023px;color:#fff;font-weight:bold">Baza danych: C:\Program Files (x86)\ROGER\RCPMaster4\Demo\DemoPL.sdf</div>
<div class="a" style="left:611px;top:1020px;width:1px;height:18px;background:#484848"></div>
<svg style="left:619px;top:1021px" width="16" height="16" viewBox="0 0 16 16"><circle cx="8" cy="8" r="7.8" fill="#5cb531"/><path d="M4 8.2 L7 11 L12 5.2" fill="none" stroke="#fff" stroke-width="2.2"/></svg>
<div class="t" style="letter-spacing:-0.005px;left:639px;top:1023px;color:#e2e2e2">Serwer licencji: 192.168.0.95:8850</div>
<svg style="left:1696px;top:1021px" width="16" height="16" viewBox="0 0 16 16"><rect x="1" y="0" width="7.5" height="11" fill="#cfcfcf"/><path d="M2 2 h5.5 M2 4 h5.5 M2 6 h5.5 M2 8 h5.5" stroke="#a4a4a4" stroke-width=".9"/><rect x="7.4" y="5.8" width="7" height="9.8" fill="#dadada"/><path d="M8.4 7.8 h5 M8.4 9.8 h5 M8.4 11.8 h5 M8.4 13.8 h5" stroke="#a8a8a8" stroke-width=".9"/><path d="M9.5 1.5 Q13.2 1.2 13.6 5" fill="none" stroke="#a8a8a8" stroke-width="1.7"/><path d="M8.6 0 V3.4 L10.8 1.6 Z" fill="#a8a8a8"/><path d="M6 14.6 Q2 14.8 1.6 11.6" fill="none" stroke="#a8a8a8" stroke-width="1.7"/><path d="M7 13 V16 L4.8 14.6 Z" fill="#a8a8a8"/></svg>
<div class="a" style="left:1719px;top:1020px;width:1px;height:18px;background:#484848"></div>
<div class="a" style="left:1721px;top:1018px;width:28px;height:22px;background:#363636"></div>
<svg style="left:1729px;top:1024px" width="11" height="10" viewBox="0 0 11 10"><rect x="0.5" y="0.5" width="10" height="9" fill="#3c3c3c" stroke="#5c5c5c" stroke-width="1"/><rect x="0" y="0" width="11" height="2" fill="#707070"/><rect x="1" y="2" width="2.3" height="7" fill="#fff"/></svg>
<svg style="left:1757px;top:1023px" width="11" height="11" viewBox="0 0 11 11"><rect x="0.6" y="0.5" width="4.2" height="8" fill="#f0f0f0"/><rect x="5.8" y="0.5" width="4.2" height="8" fill="#f0f0f0"/><path d="M1 2.2 h3.4 M1 4.2 h3.4 M1 6.2 h3.4 M6.2 2.2 h3.4 M6.2 4.2 h3.4 M6.2 6.2 h3.4" stroke="#666" stroke-width=".9"/><path d="M0.6 9.4 H4.6 L5.3 10 L6 9.4 H10" fill="none" stroke="#b4b4b4" stroke-width=".8"/></svg>
<div class="a" style="left:1778px;top:1020px;width:1px;height:18px;background:#484848"></div>
<svg style="left:1788px;top:1022px" width="12" height="14" viewBox="0 0 12 14"><rect width="12" height="14" rx="1" fill="#d2d2d2"/><rect width="12" height="3" rx="1" fill="#c2c2c2"/><path d="M6 4.2 Q8 4.2 8 6.4 Q8 7.8 7.1 8.4 V9 Q9.6 9.4 9.8 10.6 H2.2 Q2.4 9.4 4.9 9 V8.4 Q4 7.8 4 6.4 Q4 4.2 6 4.2 Z" fill="#8e8e8e"/></svg>
<div class="t" style="letter-spacing:0.435px;left:1807px;top:1023px;color:#fff;font-weight:bold">Operatorzy: Admin</div>
<!-- ===== document tabs ===== -->
<div class="a" style="left:460px;top:155px;width:203px;height:25px;background:#444"></div>
<div class="box" style="left:322px;top:179px;width:1596px;height:837px;border-top-width:2px"></div>
<svg style="left:334px;top:159px" width="16" height="16" viewBox="0 0 16 16">
 <path d="M3 7.6 L8 2.8 L13 7.6 V14 H3 Z" fill="#eef2fb" stroke="#5585d6" stroke-width="1.1"/>
 <path d="M0.8 8.4 L8 1.3 L15.2 8.4" fill="none" stroke="#3f78d4" stroke-width="1.9"/>
 <rect x="5.8" y="7" width="4.2" height="4.2" fill="#5b8be0" stroke="#c8d6f4" stroke-width=".9"/>
 <ellipse cx="13" cy="13.9" rx="2.4" ry="1.6" fill="#5abf42"/></svg>
<div class="t" style="left:352px;top:161px;color:#f0f0f0;letter-spacing:.05px">Strona startowa</div>
<svg style="left:444px;top:163px" width="9" height="9" viewBox="0 0 9 9"><path d="M0.8 0.8 L8.2 8.2 M8.2 0.8 L0.8 8.2" stroke="#e0e0e0" stroke-width="1.5"/></svg>
<svg style="left:472px;top:159px" width="16" height="16" viewBox="0 0 16 16">
 <rect x="1.2" y="1.4" width="14" height="3.4" fill="#3f8fe0"/><path d="M3.8 0.2 v2.8 M12.6 0.2 v2.8" stroke="#eaf2fc" stroke-width="1.4"/>
 <rect x="1.2" y="4.8" width="14" height="9.8" fill="#f5f5f9"/><path d="M6 4.8 V14.6 M10.6 4.8 V14.6 M1.2 9.6 H15.2" stroke="#c4c4d6" stroke-width=".8"/>
 <path d="M7.4 6.4 H10.4 V9.4 H7.4 Z M3.4 9.6 H7.4 M5.6 9.6 V13" fill="none" stroke="#e23a2a" stroke-width="1"/>
 <rect x="0" y="11" width="4.6" height="4.6" fill="#1e1e1e"/><path d="M1.1 14.4 L3.5 12.1 M3.5 12.1 H2 M3.5 12.1 V13.6" stroke="#fff" stroke-width=".9" fill="none"/></svg>
<div class="t" style="letter-spacing:-0.225px;left:490px;top:161px;color:#bdbdbd">Sprawdź kompletność danych</div>
<svg style="left:645px;top:163px" width="9" height="9" viewBox="0 0 9 9"><path d="M0.8 0.8 L8.2 8.2 M8.2 0.8 L0.8 8.2" stroke="#d0d0d0" stroke-width="1.5"/></svg>
<svg style="left:1904px;top:162px" width="9" height="5" viewBox="0 0 9 5"><path d="M0 0 H9 L4.5 5 Z" fill="#7db9f5"/></svg>
<!-- ===== form ===== -->
<div class="box" style="left:327px;top:196px;width:1586px;height:815px"></div>
<div class="gl" style="letter-spacing:-0.266px;left:334px;top:189px">Wyniki</div>
<div class="box" style="left:334px;top:223px;width:517px;height:171px"></div>
<div class="gl" style="letter-spacing:-0.343px;left:341px;top:215px">Zakres czasu</div>
<svg style="left:340px;top:243px" width="15" height="14" viewBox="0 0 15 14"><circle cx="7.4" cy="6.5" r="6.1" fill="#fff" stroke="#3a3a3a" stroke-width="1"/><circle cx="7.4" cy="6.5" r="3.7" fill="#363636"/></svg>
<div class="t lt" style="letter-spacing:-0.293px;left:359px;top:244px">Miesiąc:</div>
<div class="inp" style="left:435px;top:268px;width:55px;height:20px"><div class="t" style="left:0;top:3px;width:35px;text-align:right">2021</div></div>
<div class="a" style="left:473px;top:269px;width:16px;height:18px;background:#b4b4b4;border-left:1px solid #444"></div>
<div class="a" style="left:474px;top:277px;width:15px;height:1px;background:#444"></div>
<svg style="left:478px;top:271px" width="7" height="4" viewBox="0 0 7 4"><path d="M0 4 H7 L3.5 0 Z" fill="#444"/></svg>
<svg style="left:478px;top:281px" width="7" height="4" viewBox="0 0 7 4"><path d="M0 0 H7 L3.5 4 Z" fill="#444"/></svg>
<div class="inp" style="left:498px;top:268px;width:344px;height:20px"><div class="t" style="left:3px;top:3px">styczeń</div><div class="dd"></div></div>
<svg style="left:340px;top:300px" width="15" height="14" viewBox="0 0 15 14"><circle cx="7.4" cy="6.5" r="6.1" fill="#fff" stroke="#3a3a3a" stroke-width="1"/></svg>
<div class="t lt" style="letter-spacing:-0.207px;left:359px;top:301px">Okres czasu:</div>
<div class="t" style="letter-spacing:-0.120px;left:342px;top:329px;color:#a2a2a2">Data rozpoczęcia:</div>
<div class="inp" style="left:435px;top:325px;width:407px;height:20px;background:#6a6a6a"><div class="t" style="left:3px;top:3px;color:#a8a8a8">12.01.2022</div><div class="dd" style="background:#6a6a6a;border-left-color:#555"></div></div>
<div class="t" style="letter-spacing:-0.165px;left:342px;top:357px;color:#a2a2a2">Data zakończenia:</div>
<div class="inp" style="left:435px;top:353px;width:407px;height:20px;background:#6a6a6a"><div class="t" style="left:3px;top:3px;color:#a8a8a8">12.01.2022</div><div class="dd" style="background:#6a6a6a;border-left-color:#555"></div></div>
<div class="box" style="left:859px;top:222px;width:487px;height:100px"></div>
<div class="gl" style="left:865px;top:215px">Kto</div>
<div class="box" style="left:864px;top:235px;width:477px;height:27px"></div>
<svg style="left:869px;top:242px" width="15" height="14" viewBox="0 0 15 14"><circle cx="7.4" cy="6.5" r="5.7" fill="#b4b4b4" stroke="#505050" stroke-width="1"/></svg>
<div class="t lt" style="letter-spacing:-0.295px;left:886px;top:243px">Pracownicy</div>
<svg style="left:1102px;top:242px" width="15" height="14" viewBox="0 0 15 14"><circle cx="7.4" cy="6.5" r="5.7" fill="#b4b4b4" stroke="#3a3a3a" stroke-width="1"/><circle cx="7.4" cy="6.5" r="3.1" fill="#222"/></svg>
<div class="t lt" style="left:1119px;top:243px">Grupy</div>
<div class="t lt" style="left:866px;top:269px">Wybrane obiekty</div>
<div class="inp" style="left:866px;top:284px;width:473px;height:20px"><div class="t" style="letter-spacing:0.162px;left:3px;top:3px">[2] Administracja, [3] Brygada I, [4] Brygada II, [5] Brygada III, [6] Brygada IV, [11] Bryg...</div><div class="dd"></div></div>
<div class="box" style="left:1352px;top:220px;width:556px;height:150px"></div>
<div class="gl" style="letter-spacing:-0.238px;left:1358px;top:213px">Rodzaj niezgodności</div>
<div class="inp" style="left:1364px;top:240px;width:532px;height:92px;overflow:hidden">
<div class="a" style="left:3px;top:2px;width:13px;height:13px;border:1px solid #444;background:#b9b9b9"></div>
<svg style="left:5px;top:4px" width="10" height="9" viewBox="0 0 10 9"><path d="M0.8 4.8 L3.6 7.6 L9.2 0.8" fill="none" stroke="#444" stroke-width="1.3"/></svg>
<div class="t" style="letter-spacing:-0.150px;left:23px;top:3px">Brak rejestracji rozpoczęcia i/lub zakończenia czasu pracy</div>
<div class="a" style="left:3px;top:19px;width:13px;height:13px;border:1px solid #444;background:#b9b9b9"></div>
<svg style="left:5px;top:21px" width="10" height="9" viewBox="0 0 10 9"><path d="M0.8 4.8 L3.6 7.6 L9.2 0.8" fill="none" stroke="#444" stroke-width="1.3"/></svg>
<div class="t" style="letter-spacing:-0.374px;left:23px;top:20px">Spóźnienia</div>
<div class="a" style="left:3px;top:36px;width:13px;height:13px;border:1px solid #444;background:#b9b9b9"></div>
<svg style="left:5px;top:38px" width="10" height="9" viewBox="0 0 10 9"><path d="M0.8 4.8 L3.6 7.6 L9.2 0.8" fill="none" stroke="#444" stroke-width="1.3"/></svg>
<div class="t" style="letter-spacing:-0.193px;left:23px;top:37px">Wyjścia wcześniejsze</div>
<div class="a" style="left:3px;top:53px;width:13px;height:13px;border:1px solid #444;background:#b9b9b9"></div>
<svg style="left:5px;top:55px" width="10" height="9" viewBox="0 0 10 9"><path d="M0.8 4.8 L3.6 7.6 L9.2 0.8" fill="none" stroke="#444" stroke-width="1.3"/></svg>
<div class="t" style="letter-spacing:-0.087px;left:23px;top:54px">Rejestracja w dniu wolnym od pracy</div>
<div class="a" style="left:3px;top:70px;width:13px;height:13px;border:1px solid #444;background:#b9b9b9"></div>
<svg style="left:5px;top:72px" width="10" height="9" viewBox="0 0 10 9"><path d="M0.8 4.8 L3.6 7.6 L9.2 0.8" fill="none" stroke="#444" stroke-width="1.3"/></svg>
<div class="t" style="letter-spacing:-0.210px;left:23px;top:71px">Przekroczenia czasu przebywania</div>
<div class="a" style="left:3px;top:87px;width:13px;height:13px;border:1px solid #444;background:#b9b9b9"></div>
<div class="a" style="right:0;top:0;width:17px;height:90px;background:#b4b4b4"></div>
<div class="a" style="right:0;top:17px;width:17px;height:28px;background:#989898"></div>
<svg style="right:5px;top:5px" width="7" height="6" viewBox="0 0 7 6"><path d="M0.7 5.4 L3.5 1.7 L6.3 5.4" fill="none" stroke="#444" stroke-width="1.9"/></svg>
<svg style="right:5px;top:79px" width="7" height="6" viewBox="0 0 7 6"><path d="M0.7 0.6 L3.5 4.3 L6.3 0.6" fill="none" stroke="#444" stroke-width="1.9"/></svg>
</div>
<div class="btn" style="left:1364px;top:337px;width:263px;height:21px;line-height:19px">Zaznacz wszystko</div>
<div class="btn" style="left:1631px;top:337px;width:265px;height:21px;line-height:19px">Odznacz wszystko</div>
<div class="btn" style="left:1352px;top:374px;width:95px;height:22px;line-height:21px;padding-left:17px">Raport</div>
<svg style="left:1355px;top:377px" width="16" height="15" viewBox="0 0 16 15"><rect x="5" y="1" width="6" height="4.5" fill="#cfe4fb"/><rect x="1.6" y="4.6" width="12.8" height="7.2" rx="1" fill="#f2f2f2"/><rect x="2.8" y="4" width="10.4" height="6" rx="1.2" fill="#69b820"/><rect x="3.2" y="4.6" width="9.6" height="1.6" fill="#8fd84a"/><path d="M0 12.2 H16" stroke="#9a9a9a" stroke-width=".7"/><rect x="4.5" y="11.4" width="7.4" height="3" fill="#cfe4fb"/></svg>
<div class="btn" style="left:1699px;top:374px;width:209px;height:22px;line-height:21px;padding-left:17px">Szukaj</div>
<svg style="left:1702px;top:376px" width="17" height="17" viewBox="0 0 17 17"><path d="M1.5 15.5 L8 9" stroke="#333" stroke-width="2.2"/><path d="M3.5 13.5 L8 9" stroke="#999" stroke-width="1.5"/><circle cx="11" cy="6" r="4.6" fill="#dcecfa" stroke="#f8f8f8" stroke-width="1.4"/></svg>
<!-- ===== grid ===== -->
<div class="box" style="left:332px;top:400px;width:1576px;height:606px"></div>
<div class="t" style="left:337px;top:412px;color:#c2c2c2;letter-spacing:-.07px">Przeciągnij tutaj nagłówek kolumny, jeśli ma ona być podstawą grupowania</div>
<svg style="left:1881px;top:408px" width="19" height="19" viewBox="0 0 19 19"><circle cx="12" cy="7" r="5" fill="none" stroke="#d0d0d0" stroke-width="1.6"/><path d="M8.3 10.7 L1 18" stroke="#d0d0d0" stroke-width="1.8"/></svg>
<div class="a" style="left:333px;top:433px;width:1574px;height:1px;background:#444"></div>
<div class="a" style="left:333px;top:434px;width:1574px;height:19px;background:#b4b4b4"></div>
<div class="a" style="left:333px;top:453px;width:1574px;height:1px;background:#444"></div>
<div class="hd" style="left:352px;width:91px">Typ</div>
<div class="hd" style="left:444px;width:147px">Data</div>
<div class="hd" style="left:592px;width:647px">Informacja</div>
<div class="hd" style="left:1240px;width:276px">Pracownik</div>
<div class="hd" style="left:1517px;width:373px">Nazwa dnia pracy</div>
<div class="hs" style="left:351px"></div>
<div class="hs" style="left:443px"></div>
<div class="hs" style="left:591px"></div>
<div class="hs" style="left:1239px"></div>
<div class="hs" style="left:1516px"></div>
<div class="hs" style="left:1890px"></div>
<div class="a" style="left:333px;top:454px;width:18px;height:551px;background:#b4b4b4"></div>
<div class="a" style="left:351px;top:454px;width:1px;height:551px;background:#444"></div>
<svg style="left:341px;top:461px" width="4" height="7" viewBox="0 0 4 7"><path d="M0 0 L4 3.5 L0 7 Z" fill="#404040"/></svg>
<div class="a" style="left:0;top:454px;width:1890px;height:551px;overflow:hidden">
<div class="row f" style="top:0px"><svg style="left:38px;top:2px" width="16" height="15" viewBox="0 0 16 15"><path d="M8 0.9 L15.2 13 Q15.5 14.1 14.4 14.1 H1.6 Q0.5 14.1 0.8 13 Z" fill="#f4d21f" stroke="#b38f14" stroke-width=".9"/><path d="M8 2.8 L12.8 11.2 Q10 9.5 4.2 11.2 Z" fill="#fff08a" opacity=".5"/><path d="M6.1 5 Q6.1 3.4 8 3.4 Q9.9 3.4 9.9 5 L8.8 9.9 H7.2 Z" fill="#2a2a2a"/><circle cx="8" cy="11.8" r="1.45" fill="#2a2a2a"/></svg><div class="c" style="left:96px;letter-spacing:0.094px">01.01.2021</div><div class="c" style="left:244px"><span class="lnk" style="letter-spacing:-0.083px">Rejestracja zdarzenia poza definicją dnia pracy</span></div><div class="c" style="left:892px;letter-spacing:0.074px">[147]: Arent Allen</div><div class="c" style="left:1168px;letter-spacing:-0.255px">Święto</div></div>
<div class="row" style="top:21px"><svg style="left:38px;top:2px" width="16" height="15" viewBox="0 0 16 15"><path d="M8 0.9 L15.2 13 Q15.5 14.1 14.4 14.1 H1.6 Q0.5 14.1 0.8 13 Z" fill="#f4d21f" stroke="#b38f14" stroke-width=".9"/><path d="M8 2.8 L12.8 11.2 Q10 9.5 4.2 11.2 Z" fill="#fff08a" opacity=".5"/><path d="M6.1 5 Q6.1 3.4 8 3.4 Q9.9 3.4 9.9 5 L8.8 9.9 H7.2 Z" fill="#2a2a2a"/><circle cx="8" cy="11.8" r="1.45" fill="#2a2a2a"/></svg><div class="c" style="left:96px;letter-spacing:0.094px">07.01.2021</div><div class="c" style="left:244px"><span class="lnk" style="letter-spacing:-0.142px">Niewypracowanie normy dnia</span></div><div class="c" style="left:892px;letter-spacing:0.074px">[147]: Arent Allen</div><div class="c" style="left:1168px;letter-spacing:-0.249px">Dzień nienormowany 8h z zaokrągleniem czasu zaliczonego</div></div>
<div class="row" style="top:42px"><svg style="left:38px;top:2px" width="16" height="16" viewBox="0 0 16 16"><circle cx="8" cy="8" r="7.4" fill="#d63a34" stroke="#e27a74" stroke-width="1"/><ellipse cx="8" cy="5" rx="5.4" ry="3.4" fill="#ec7a72" opacity=".55"/><path d="M5.3 5.3 L10.7 10.7 M10.7 5.3 L5.3 10.7" stroke="#f4f6fb" stroke-width="3" stroke-linecap="round"/></svg><div class="c" style="left:96px;letter-spacing:0.094px">20.01.2021</div><div class="c" style="left:244px"><span class="lnk" style="letter-spacing:-0.115px">Brak rejestracji zakończenia pracy</span></div><div class="c" style="left:892px;letter-spacing:0.074px">[147]: Arent Allen</div><div class="c" style="left:1168px;letter-spacing:-0.249px">Dzień nienormowany 8h z zaokrągleniem czasu zaliczonego</div></div>
<div class="row" style="top:63px"><svg style="left:38px;top:2px" width="16" height="15" viewBox="0 0 16 15"><path d="M8 0.9 L15.2 13 Q15.5 14.1 14.4 14.1 H1.6 Q0.5 14.1 0.8 13 Z" fill="#f4d21f" stroke="#b38f14" stroke-width=".9"/><path d="M8 2.8 L12.8 11.2 Q10 9.5 4.2 11.2 Z" fill="#fff08a" opacity=".5"/><path d="M6.1 5 Q6.1 3.4 8 3.4 Q9.9 3.4 9.9 5 L8.8 9.9 H7.2 Z" fill="#2a2a2a"/><circle cx="8" cy="11.8" r="1.45" fill="#2a2a2a"/></svg><div class="c" style="left:96px;letter-spacing:0.094px">04.01.2021</div><div class="c" style="left:244px"><span class="lnk" style="letter-spacing:-0.233px">Dla typu obecności Śniadanie przekroczono maksimum czasu przebywania</span></div><div class="c" style="left:892px;letter-spacing:0.049px">[004]: Arispe Anastatio</div><div class="c" style="left:1168px;"></div></div>
<div class="row" style="top:84px"><svg style="left:38px;top:2px" width="16" height="15" viewBox="0 0 16 15"><path d="M8 0.9 L15.2 13 Q15.5 14.1 14.4 14.1 H1.6 Q0.5 14.1 0.8 13 Z" fill="#f4d21f" stroke="#b38f14" stroke-width=".9"/><path d="M8 2.8 L12.8 11.2 Q10 9.5 4.2 11.2 Z" fill="#fff08a" opacity=".5"/><path d="M6.1 5 Q6.1 3.4 8 3.4 Q9.9 3.4 9.9 5 L8.8 9.9 H7.2 Z" fill="#2a2a2a"/><circle cx="8" cy="11.8" r="1.45" fill="#2a2a2a"/></svg><div class="c" style="left:96px;letter-spacing:0.094px">29.01.2021</div><div class="c" style="left:244px"><span class="lnk" style="letter-spacing:-0.233px">Dla typu obecności Śniadanie przekroczono maksimum czasu przebywania</span></div><div class="c" style="left:892px;letter-spacing:0.049px">[004]: Arispe Anastatio</div><div class="c" style="left:1168px;"></div></div>
<div class="row" style="top:105px"><svg style="left:38px;top:2px" width="16" height="15" viewBox="0 0 16 15"><path d="M8 0.9 L15.2 13 Q15.5 14.1 14.4 14.1 H1.6 Q0.5 14.1 0.8 13 Z" fill="#f4d21f" stroke="#b38f14" stroke-width=".9"/><path d="M8 2.8 L12.8 11.2 Q10 9.5 4.2 11.2 Z" fill="#fff08a" opacity=".5"/><path d="M6.1 5 Q6.1 3.4 8 3.4 Q9.9 3.4 9.9 5 L8.8 9.9 H7.2 Z" fill="#2a2a2a"/><circle cx="8" cy="11.8" r="1.45" fill="#2a2a2a"/></svg><div class="c" style="left:96px;letter-spacing:0.094px">14.01.2021</div><div class="c" style="left:244px"><span class="lnk" style="letter-spacing:-0.183px">Wyjście wcześniejsze</span></div><div class="c" style="left:892px;letter-spacing:-0.231px">[010]: Bonds Eliseo</div><div class="c" style="left:1168px;letter-spacing:0.007px">Dzień stały 8:00-16:00</div></div>
<div class="row" style="top:126px"><svg style="left:38px;top:2px" width="16" height="15" viewBox="0 0 16 15"><path d="M8 0.9 L15.2 13 Q15.5 14.1 14.4 14.1 H1.6 Q0.5 14.1 0.8 13 Z" fill="#f4d21f" stroke="#b38f14" stroke-width=".9"/><path d="M8 2.8 L12.8 11.2 Q10 9.5 4.2 11.2 Z" fill="#fff08a" opacity=".5"/><path d="M6.1 5 Q6.1 3.4 8 3.4 Q9.9 3.4 9.9 5 L8.8 9.9 H7.2 Z" fill="#2a2a2a"/><circle cx="8" cy="11.8" r="1.45" fill="#2a2a2a"/></svg><div class="c" style="left:96px;letter-spacing:0.094px">22.01.2021</div><div class="c" style="left:244px"><span class="lnk" style="letter-spacing:-0.344px">Spóźnienie</span></div><div class="c" style="left:892px;letter-spacing:-0.231px">[010]: Bonds Eliseo</div><div class="c" style="left:1168px;letter-spacing:0.007px">Dzień stały 8:00-16:00</div></div>
<div class="row" style="top:147px"><svg style="left:38px;top:2px" width="16" height="15" viewBox="0 0 16 15"><path d="M8 0.9 L15.2 13 Q15.5 14.1 14.4 14.1 H1.6 Q0.5 14.1 0.8 13 Z" fill="#f4d21f" stroke="#b38f14" stroke-width=".9"/><path d="M8 2.8 L12.8 11.2 Q10 9.5 4.2 11.2 Z" fill="#fff08a" opacity=".5"/><path d="M6.1 5 Q6.1 3.4 8 3.4 Q9.9 3.4 9.9 5 L8.8 9.9 H7.2 Z" fill="#2a2a2a"/><circle cx="8" cy="11.8" r="1.45" fill="#2a2a2a"/></svg><div class="c" style="left:96px;letter-spacing:0.175px">11.01.2021</div><div class="c" style="left:244px"><span class="lnk" style="letter-spacing:-0.083px">Rejestracja zdarzenia poza definicją dnia pracy</span></div><div class="c" style="left:892px;letter-spacing:-0.087px">[005]: Buckner Thorvald</div><div class="c" style="left:1168px;letter-spacing:-0.267px">Dzień 2-zmianowy</div></div>
<div class="row" style="top:168px"><svg style="left:38px;top:2px" width="16" height="15" viewBox="0 0 16 15"><path d="M8 0.9 L15.2 13 Q15.5 14.1 14.4 14.1 H1.6 Q0.5 14.1 0.8 13 Z" fill="#f4d21f" stroke="#b38f14" stroke-width=".9"/><path d="M8 2.8 L12.8 11.2 Q10 9.5 4.2 11.2 Z" fill="#fff08a" opacity=".5"/><path d="M6.1 5 Q6.1 3.4 8 3.4 Q9.9 3.4 9.9 5 L8.8 9.9 H7.2 Z" fill="#2a2a2a"/><circle cx="8" cy="11.8" r="1.45" fill="#2a2a2a"/></svg><div class="c" style="left:96px;letter-spacing:0.094px">15.01.2021</div><div class="c" style="left:244px"><span class="lnk" style="letter-spacing:-0.073px">Rejestracja w dniu wolnym od pracy</span></div><div class="c" style="left:892px;letter-spacing:-0.087px">[005]: Buckner Thorvald</div><div class="c" style="left:1168px;letter-spacing:-0.256px">Dzień wolny</div></div>
<div class="row" style="top:189px"><svg style="left:38px;top:2px" width="16" height="15" viewBox="0 0 16 15"><path d="M8 0.9 L15.2 13 Q15.5 14.1 14.4 14.1 H1.6 Q0.5 14.1 0.8 13 Z" fill="#f4d21f" stroke="#b38f14" stroke-width=".9"/><path d="M8 2.8 L12.8 11.2 Q10 9.5 4.2 11.2 Z" fill="#fff08a" opacity=".5"/><path d="M6.1 5 Q6.1 3.4 8 3.4 Q9.9 3.4 9.9 5 L8.8 9.9 H7.2 Z" fill="#2a2a2a"/><circle cx="8" cy="11.8" r="1.45" fill="#2a2a2a"/></svg><div class="c" style="left:96px;letter-spacing:0.094px">19.01.2021</div><div class="c" style="left:244px"><span class="lnk" style="letter-spacing:-0.233px">Dla typu obecności Śniadanie przekroczono maksimum czasu przebywania</span></div><div class="c" style="left:892px;letter-spacing:-0.087px">[005]: Buckner Thorvald</div><div class="c" style="left:1168px;"></div></div>
<div class="row" style="top:210px"><svg style="left:38px;top:2px" width="16" height="15" viewBox="0 0 16 15"><path d="M8 0.9 L15.2 13 Q15.5 14.1 14.4 14.1 H1.6 Q0.5 14.1 0.8 13 Z" fill="#f4d21f" stroke="#b38f14" stroke-width=".9"/><path d="M8 2.8 L12.8 11.2 Q10 9.5 4.2 11.2 Z" fill="#fff08a" opacity=".5"/><path d="M6.1 5 Q6.1 3.4 8 3.4 Q9.9 3.4 9.9 5 L8.8 9.9 H7.2 Z" fill="#2a2a2a"/><circle cx="8" cy="11.8" r="1.45" fill="#2a2a2a"/></svg><div class="c" style="left:96px;letter-spacing:0.094px">06.01.2021</div><div class="c" style="left:244px"><span class="lnk" style="letter-spacing:-0.083px">Rejestracja zdarzenia poza definicją dnia pracy</span></div><div class="c" style="left:892px;letter-spacing:-0.223px">[006]: Chambless Rudi</div><div class="c" style="left:1168px;letter-spacing:-0.255px">Święto</div></div>
<div class="row" style="top:231px"><svg style="left:38px;top:2px" width="16" height="15" viewBox="0 0 16 15"><path d="M8 0.9 L15.2 13 Q15.5 14.1 14.4 14.1 H1.6 Q0.5 14.1 0.8 13 Z" fill="#f4d21f" stroke="#b38f14" stroke-width=".9"/><path d="M8 2.8 L12.8 11.2 Q10 9.5 4.2 11.2 Z" fill="#fff08a" opacity=".5"/><path d="M6.1 5 Q6.1 3.4 8 3.4 Q9.9 3.4 9.9 5 L8.8 9.9 H7.2 Z" fill="#2a2a2a"/><circle cx="8" cy="11.8" r="1.45" fill="#2a2a2a"/></svg><div class="c" style="left:96px;letter-spacing:0.094px">06.01.2021</div><div class="c" style="left:244px"><span class="lnk" style="letter-spacing:-0.083px">Rejestracja zdarzenia poza definicją dnia pracy</span></div><div class="c" style="left:892px;letter-spacing:-0.107px">[007]: Chevere Lucinde</div><div class="c" style="left:1168px;letter-spacing:-0.255px">Święto</div></div>
<div class="row" style="top:252px"><svg style="left:38px;top:2px" width="16" height="15" viewBox="0 0 16 15"><path d="M8 0.9 L15.2 13 Q15.5 14.1 14.4 14.1 H1.6 Q0.5 14.1 0.8 13 Z" fill="#f4d21f" stroke="#b38f14" stroke-width=".9"/><path d="M8 2.8 L12.8 11.2 Q10 9.5 4.2 11.2 Z" fill="#fff08a" opacity=".5"/><path d="M6.1 5 Q6.1 3.4 8 3.4 Q9.9 3.4 9.9 5 L8.8 9.9 H7.2 Z" fill="#2a2a2a"/><circle cx="8" cy="11.8" r="1.45" fill="#2a2a2a"/></svg><div class="c" style="left:96px;letter-spacing:0.094px">19.01.2021</div><div class="c" style="left:244px"><span class="lnk" style="letter-spacing:-0.233px">Dla typu obecności Śniadanie przekroczono maksimum czasu przebywania</span></div><div class="c" style="left:892px;letter-spacing:-0.107px">[007]: Chevere Lucinde</div><div class="c" style="left:1168px;"></div></div>
<div class="row" style="top:273px"><svg style="left:38px;top:2px" width="16" height="15" viewBox="0 0 16 15"><path d="M8 0.9 L15.2 13 Q15.5 14.1 14.4 14.1 H1.6 Q0.5 14.1 0.8 13 Z" fill="#f4d21f" stroke="#b38f14" stroke-width=".9"/><path d="M8 2.8 L12.8 11.2 Q10 9.5 4.2 11.2 Z" fill="#fff08a" opacity=".5"/><path d="M6.1 5 Q6.1 3.4 8 3.4 Q9.9 3.4 9.9 5 L8.8 9.9 H7.2 Z" fill="#2a2a2a"/><circle cx="8" cy="11.8" r="1.45" fill="#2a2a2a"/></svg><div class="c" style="left:96px;letter-spacing:0.094px">06.01.2021</div><div class="c" style="left:244px"><span class="lnk" style="letter-spacing:-0.083px">Rejestracja zdarzenia poza definicją dnia pracy</span></div><div class="c" style="left:892px;letter-spacing:-0.084px">[128]: Childres Adrienne</div><div class="c" style="left:1168px;letter-spacing:-0.255px">Święto</div></div>
<div class="row" style="top:294px"><svg style="left:38px;top:2px" width="16" height="15" viewBox="0 0 16 15"><path d="M8 0.9 L15.2 13 Q15.5 14.1 14.4 14.1 H1.6 Q0.5 14.1 0.8 13 Z" fill="#f4d21f" stroke="#b38f14" stroke-width=".9"/><path d="M8 2.8 L12.8 11.2 Q10 9.5 4.2 11.2 Z" fill="#fff08a" opacity=".5"/><path d="M6.1 5 Q6.1 3.4 8 3.4 Q9.9 3.4 9.9 5 L8.8 9.9 H7.2 Z" fill="#2a2a2a"/><circle cx="8" cy="11.8" r="1.45" fill="#2a2a2a"/></svg><div class="c" style="left:96px;letter-spacing:0.094px">15.01.2021</div><div class="c" style="left:244px"><span class="lnk" style="letter-spacing:-0.233px">Dla typu obecności Śniadanie przekroczono maksimum czasu przebywania</span></div><div class="c" style="left:892px;letter-spacing:-0.157px">[011]: Corpuz Demelza</div><div class="c" style="left:1168px;"></div></div>
<div class="row" style="top:315px"><svg style="left:38px;top:2px" width="16" height="15" viewBox="0 0 16 15"><path d="M8 0.9 L15.2 13 Q15.5 14.1 14.4 14.1 H1.6 Q0.5 14.1 0.8 13 Z" fill="#f4d21f" stroke="#b38f14" stroke-width=".9"/><path d="M8 2.8 L12.8 11.2 Q10 9.5 4.2 11.2 Z" fill="#fff08a" opacity=".5"/><path d="M6.1 5 Q6.1 3.4 8 3.4 Q9.9 3.4 9.9 5 L8.8 9.9 H7.2 Z" fill="#2a2a2a"/><circle cx="8" cy="11.8" r="1.45" fill="#2a2a2a"/></svg><div class="c" style="left:96px;letter-spacing:0.094px">06.01.2021</div><div class="c" style="left:244px"><span class="lnk" style="letter-spacing:-0.083px">Rejestracja zdarzenia poza definicją dnia pracy</span></div><div class="c" style="left:892px;letter-spacing:-0.026px">[127]: Dixon Anna</div><div class="c" style="left:1168px;letter-spacing:-0.255px">Święto</div></div>
<div class="row" style="top:336px"><svg style="left:38px;top:2px" width="16" height="15" viewBox="0 0 16 15"><path d="M8 0.9 L15.2 13 Q15.5 14.1 14.4 14.1 H1.6 Q0.5 14.1 0.8 13 Z" fill="#f4d21f" stroke="#b38f14" stroke-width=".9"/><path d="M8 2.8 L12.8 11.2 Q10 9.5 4.2 11.2 Z" fill="#fff08a" opacity=".5"/><path d="M6.1 5 Q6.1 3.4 8 3.4 Q9.9 3.4 9.9 5 L8.8 9.9 H7.2 Z" fill="#2a2a2a"/><circle cx="8" cy="11.8" r="1.45" fill="#2a2a2a"/></svg><div class="c" style="left:96px;letter-spacing:0.094px">21.01.2021</div><div class="c" style="left:244px"><span class="lnk" style="letter-spacing:-0.344px">Spóźnienie</span></div><div class="c" style="left:892px;letter-spacing:-0.115px">[122]: Fernando Susan</div><div class="c" style="left:1168px;letter-spacing:-0.003px">Dzień stały 06:00-14:00</div></div>
<div class="row" style="top:357px"><svg style="left:38px;top:2px" width="16" height="15" viewBox="0 0 16 15"><path d="M8 0.9 L15.2 13 Q15.5 14.1 14.4 14.1 H1.6 Q0.5 14.1 0.8 13 Z" fill="#f4d21f" stroke="#b38f14" stroke-width=".9"/><path d="M8 2.8 L12.8 11.2 Q10 9.5 4.2 11.2 Z" fill="#fff08a" opacity=".5"/><path d="M6.1 5 Q6.1 3.4 8 3.4 Q9.9 3.4 9.9 5 L8.8 9.9 H7.2 Z" fill="#2a2a2a"/><circle cx="8" cy="11.8" r="1.45" fill="#2a2a2a"/></svg><div class="c" style="left:96px;letter-spacing:0.094px">27.01.2021</div><div class="c" style="left:244px"><span class="lnk" style="letter-spacing:-0.183px">Wyjście wcześniejsze</span></div><div class="c" style="left:892px;letter-spacing:-0.115px">[122]: Fernando Susan</div><div class="c" style="left:1168px;letter-spacing:-0.003px">Dzień stały 06:00-14:00</div></div>
<div class="row" style="top:378px"><svg style="left:38px;top:2px" width="16" height="16" viewBox="0 0 16 16"><circle cx="8" cy="8" r="7.4" fill="#d63a34" stroke="#e27a74" stroke-width="1"/><ellipse cx="8" cy="5" rx="5.4" ry="3.4" fill="#ec7a72" opacity=".55"/><path d="M5.3 5.3 L10.7 10.7 M10.7 5.3 L5.3 10.7" stroke="#f4f6fb" stroke-width="3" stroke-linecap="round"/></svg><div class="c" style="left:96px;letter-spacing:0.094px">28.01.2021</div><div class="c" style="left:244px"><span class="lnk" style="letter-spacing:-0.115px">Brak rejestracji zakończenia pracy</span></div><div class="c" style="left:892px;letter-spacing:-0.115px">[122]: Fernando Susan</div><div class="c" style="left:1168px;letter-spacing:-0.003px">Dzień stały 06:00-14:00</div></div>
<div class="row" style="top:399px"><svg style="left:38px;top:2px" width="16" height="15" viewBox="0 0 16 15"><path d="M8 0.9 L15.2 13 Q15.5 14.1 14.4 14.1 H1.6 Q0.5 14.1 0.8 13 Z" fill="#f4d21f" stroke="#b38f14" stroke-width=".9"/><path d="M8 2.8 L12.8 11.2 Q10 9.5 4.2 11.2 Z" fill="#fff08a" opacity=".5"/><path d="M6.1 5 Q6.1 3.4 8 3.4 Q9.9 3.4 9.9 5 L8.8 9.9 H7.2 Z" fill="#2a2a2a"/><circle cx="8" cy="11.8" r="1.45" fill="#2a2a2a"/></svg><div class="c" style="left:96px;letter-spacing:0.094px">04.01.2021</div><div class="c" style="left:244px"><span class="lnk" style="letter-spacing:-0.344px">Spóźnienie</span></div><div class="c" style="left:892px;letter-spacing:0.043px">[002]: Gerstner Herbert</div><div class="c" style="left:1168px;letter-spacing:-0.003px">Dzień stały 07:00-15:00</div></div>
<div class="row" style="top:420px"><svg style="left:38px;top:2px" width="16" height="15" viewBox="0 0 16 15"><path d="M8 0.9 L15.2 13 Q15.5 14.1 14.4 14.1 H1.6 Q0.5 14.1 0.8 13 Z" fill="#f4d21f" stroke="#b38f14" stroke-width=".9"/><path d="M8 2.8 L12.8 11.2 Q10 9.5 4.2 11.2 Z" fill="#fff08a" opacity=".5"/><path d="M6.1 5 Q6.1 3.4 8 3.4 Q9.9 3.4 9.9 5 L8.8 9.9 H7.2 Z" fill="#2a2a2a"/><circle cx="8" cy="11.8" r="1.45" fill="#2a2a2a"/></svg><div class="c" style="left:96px;letter-spacing:0.094px">05.01.2021</div><div class="c" style="left:244px"><span class="lnk" style="letter-spacing:-0.183px">Wyjście wcześniejsze</span></div><div class="c" style="left:892px;letter-spacing:0.043px">[002]: Gerstner Herbert</div><div class="c" style="left:1168px;letter-spacing:-0.003px">Dzień stały 07:00-15:00</div></div>
<div class="row" style="top:441px"><svg style="left:38px;top:2px" width="16" height="15" viewBox="0 0 16 15"><path d="M8 0.9 L15.2 13 Q15.5 14.1 14.4 14.1 H1.6 Q0.5 14.1 0.8 13 Z" fill="#f4d21f" stroke="#b38f14" stroke-width=".9"/><path d="M8 2.8 L12.8 11.2 Q10 9.5 4.2 11.2 Z" fill="#fff08a" opacity=".5"/><path d="M6.1 5 Q6.1 3.4 8 3.4 Q9.9 3.4 9.9 5 L8.8 9.9 H7.2 Z" fill="#2a2a2a"/><circle cx="8" cy="11.8" r="1.45" fill="#2a2a2a"/></svg><div class="c" style="left:96px;letter-spacing:0.094px">07.01.2021</div><div class="c" style="left:244px"><span class="lnk" style="letter-spacing:-0.344px">Spóźnienie</span></div><div class="c" style="left:892px;letter-spacing:0.043px">[002]: Gerstner Herbert</div><div class="c" style="left:1168px;letter-spacing:-0.003px">Dzień stały 07:00-15:00</div></div>
<div class="row" style="top:462px"><svg style="left:38px;top:2px" width="16" height="15" viewBox="0 0 16 15"><path d="M8 0.9 L15.2 13 Q15.5 14.1 14.4 14.1 H1.6 Q0.5 14.1 0.8 13 Z" fill="#f4d21f" stroke="#b38f14" stroke-width=".9"/><path d="M8 2.8 L12.8 11.2 Q10 9.5 4.2 11.2 Z" fill="#fff08a" opacity=".5"/><path d="M6.1 5 Q6.1 3.4 8 3.4 Q9.9 3.4 9.9 5 L8.8 9.9 H7.2 Z" fill="#2a2a2a"/><circle cx="8" cy="11.8" r="1.45" fill="#2a2a2a"/></svg><div class="c" style="left:96px;letter-spacing:0.094px">20.01.2021</div><div class="c" style="left:244px"><span class="lnk" style="letter-spacing:-0.344px">Spóźnienie</span></div><div class="c" style="left:892px;letter-spacing:0.043px">[002]: Gerstner Herbert</div><div class="c" style="left:1168px;letter-spacing:-0.003px">Dzień stały 07:00-15:00</div></div>
<div class="row" style="top:483px"><svg style="left:38px;top:2px" width="16" height="15" viewBox="0 0 16 15"><path d="M8 0.9 L15.2 13 Q15.5 14.1 14.4 14.1 H1.6 Q0.5 14.1 0.8 13 Z" fill="#f4d21f" stroke="#b38f14" stroke-width=".9"/><path d="M8 2.8 L12.8 11.2 Q10 9.5 4.2 11.2 Z" fill="#fff08a" opacity=".5"/><path d="M6.1 5 Q6.1 3.4 8 3.4 Q9.9 3.4 9.9 5 L8.8 9.9 H7.2 Z" fill="#2a2a2a"/><circle cx="8" cy="11.8" r="1.45" fill="#2a2a2a"/></svg><div class="c" style="left:96px;letter-spacing:0.094px">22.01.2021</div><div class="c" style="left:244px"><span class="lnk" style="letter-spacing:-0.183px">Wyjście wcześniejsze</span></div><div class="c" style="left:892px;letter-spacing:0.043px">[002]: Gerstner Herbert</div><div class="c" style="left:1168px;letter-spacing:-0.003px">Dzień stały 07:00-15:00</div></div>
<div class="row" style="top:504px"><svg style="left:38px;top:2px" width="16" height="15" viewBox="0 0 16 15"><path d="M8 0.9 L15.2 13 Q15.5 14.1 14.4 14.1 H1.6 Q0.5 14.1 0.8 13 Z" fill="#f4d21f" stroke="#b38f14" stroke-width=".9"/><path d="M8 2.8 L12.8 11.2 Q10 9.5 4.2 11.2 Z" fill="#fff08a" opacity=".5"/><path d="M6.1 5 Q6.1 3.4 8 3.4 Q9.9 3.4 9.9 5 L8.8 9.9 H7.2 Z" fill="#2a2a2a"/><circle cx="8" cy="11.8" r="1.45" fill="#2a2a2a"/></svg><div class="c" style="left:96px;letter-spacing:0.094px">05.01.2021</div><div class="c" style="left:244px"><span class="lnk" style="letter-spacing:-0.344px">Spóźnienie</span></div><div class="c" style="left:892px;letter-spacing:-0.060px">[008]: Huffman Allison</div><div class="c" style="left:1168px;letter-spacing:-0.120px">Praca 07.00-15.00 z przerwa na karmienie</div></div>
<div class="row" style="top:525px"><svg style="left:38px;top:2px" width="16" height="15" viewBox="0 0 16 15"><path d="M8 0.9 L15.2 13 Q15.5 14.1 14.4 14.1 H1.6 Q0.5 14.1 0.8 13 Z" fill="#f4d21f" stroke="#b38f14" stroke-width=".9"/><path d="M8 2.8 L12.8 11.2 Q10 9.5 4.2 11.2 Z" fill="#fff08a" opacity=".5"/><path d="M6.1 5 Q6.1 3.4 8 3.4 Q9.9 3.4 9.9 5 L8.8 9.9 H7.2 Z" fill="#2a2a2a"/><circle cx="8" cy="11.8" r="1.45" fill="#2a2a2a"/></svg><div class="c" style="left:96px;letter-spacing:0.094px">29.01.2021</div><div class="c" style="left:244px"><span class="lnk" style="letter-spacing:-0.344px">Spóźnienie</span></div><div class="c" style="left:892px;letter-spacing:-0.060px">[008]: Huffman Allison</div><div class="c" style="left:1168px;letter-spacing:-0.120px">Praca 07.00-15.00 z przerwa na karmienie</div></div>
<div class="row" style="top:546px"><svg style="left:38px;top:2px" width="16" height="15" viewBox="0 0 16 15"><path d="M8 0.9 L15.2 13 Q15.5 14.1 14.4 14.1 H1.6 Q0.5 14.1 0.8 13 Z" fill="#f4d21f" stroke="#b38f14" stroke-width=".9"/><path d="M8 2.8 L12.8 11.2 Q10 9.5 4.2 11.2 Z" fill="#fff08a" opacity=".5"/><path d="M6.1 5 Q6.1 3.4 8 3.4 Q9.9 3.4 9.9 5 L8.8 9.9 H7.2 Z" fill="#2a2a2a"/><circle cx="8" cy="11.8" r="1.45" fill="#2a2a2a"/></svg><div class="c" style="left:96px;"></div><div class="c" style="left:244px"><span class="lnk" style=""></span></div><div class="c" style="left:892px;"></div><div class="c" style="left:1168px;"></div></div>
</div>
<div class="vl" style="left:443px"></div>
<div class="vl" style="left:591px"></div>
<div class="vl" style="left:1239px"></div>
<div class="vl" style="left:1516px"></div>
<div class="a" style="left:1890px;top:454px;width:17px;height:551px;background:#b4b4b4"></div>
<div class="a" style="left:1890px;top:471px;width:17px;height:235px;background:#989898"></div>
<svg style="left:1895px;top:459px" width="7" height="6" viewBox="0 0 7 6"><path d="M0.7 5.4 L3.5 1.7 L6.3 5.4" fill="none" stroke="#444" stroke-width="1.9"/></svg>
<svg style="left:1895px;top:994px" width="7" height="6" viewBox="0 0 7 6"><path d="M0.7 0.6 L3.5 4.3 L6.3 0.6" fill="none" stroke="#444" stroke-width="1.9"/></svg>
</body>
</html>
